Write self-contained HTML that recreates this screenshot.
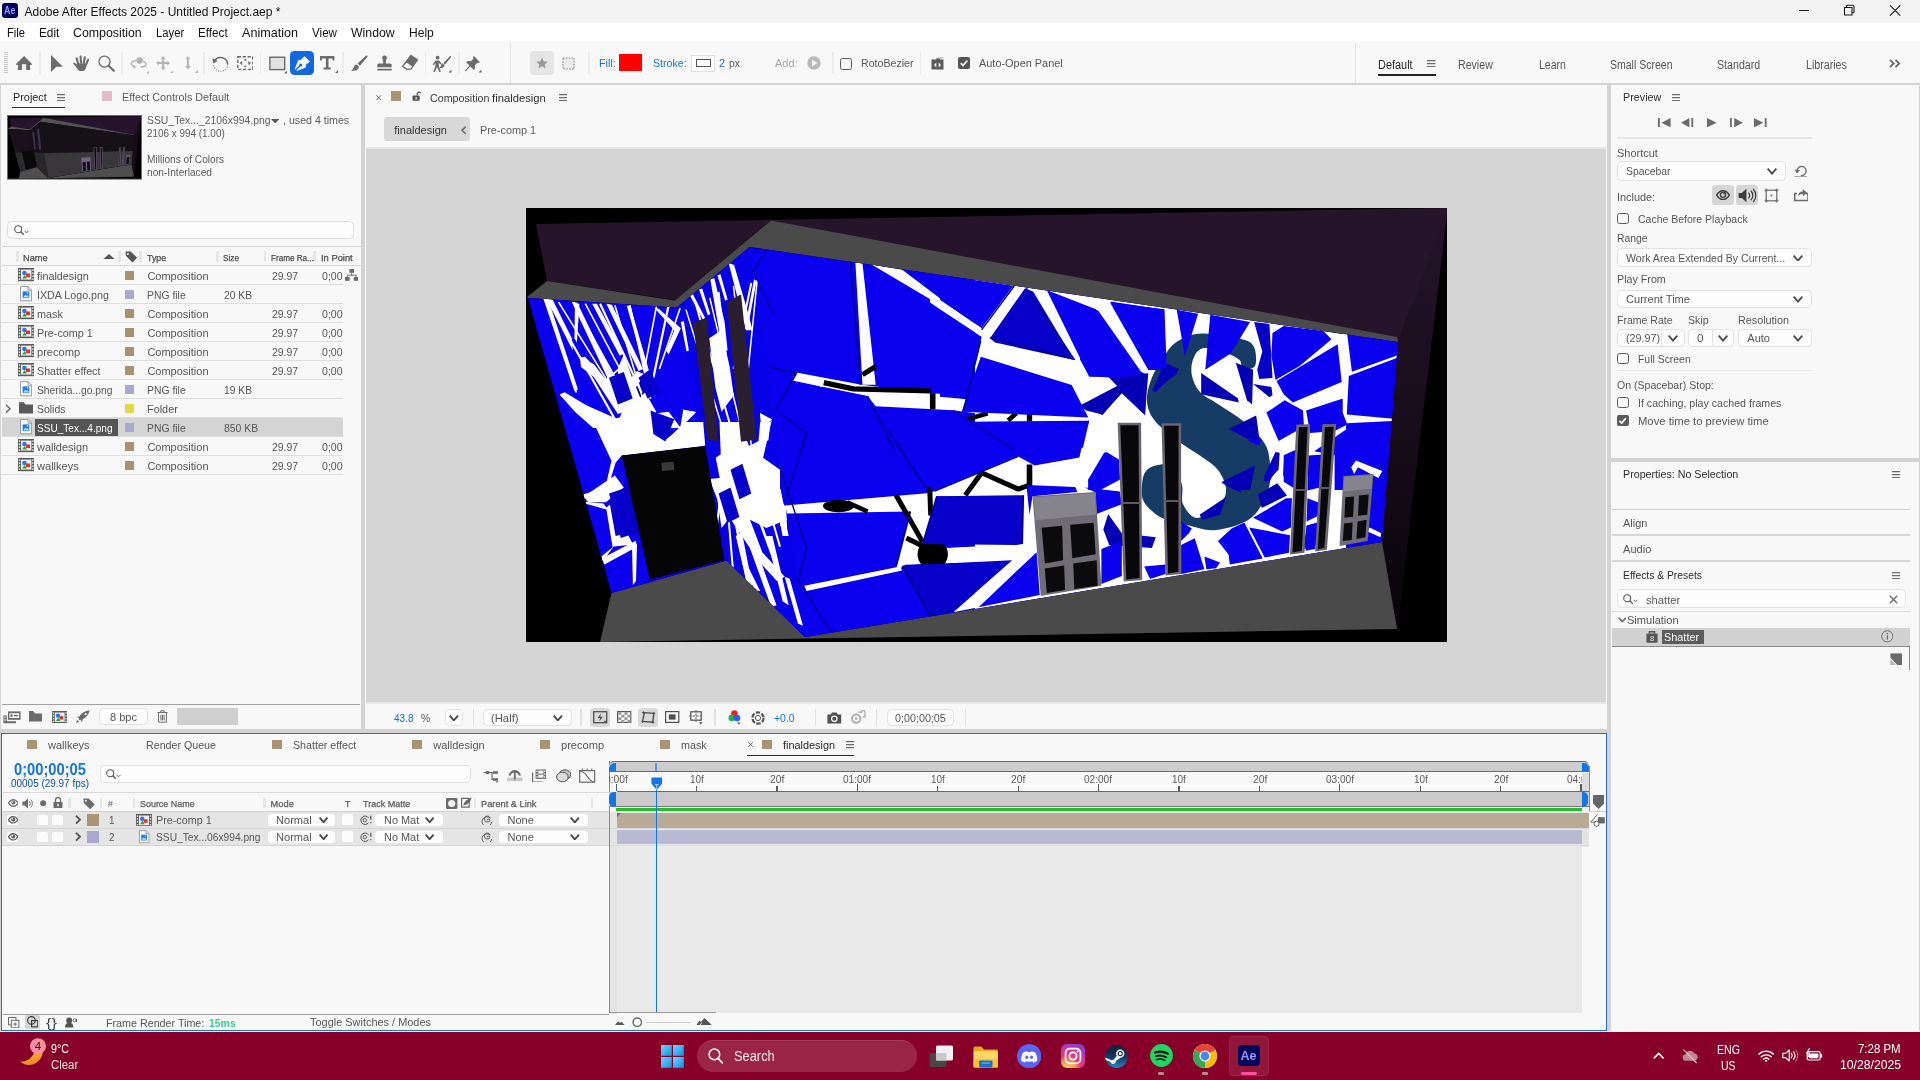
<!DOCTYPE html>
<html lang="en"><head><meta charset="utf-8"><title>Adobe After Effects 2025 - Untitled Project.aep *</title>
<style>
html,body{margin:0;padding:0;width:1920px;height:1080px;overflow:hidden;background:#d3d3d3;font-family:"Liberation Sans", sans-serif;}
#root{position:relative;width:1920px;height:1080px;overflow:hidden;will-change:transform;}
#root div,#root svg,#root span{position:absolute;display:block;box-sizing:border-box;}
.t{white-space:pre;line-height:1;transform-origin:0 50%;font-kerning:normal;}
</style></head><body><div id="root">
<div style="left:0px;top:0px;width:1920px;height:23px;background:#f3f3f3;"></div>
<div style="left:2px;top:3.1px;width:16px;height:14.9px;background:#00005b;border-radius:3px;"></div>
<span class="t" id="t0" style="left:4.2px;top:5px;font-size:10.5px;color:#9999ff;font-weight:700;transform:scaleX(0.8409);">Ae</span>
<span class="t" id="t1" style="left:24.5px;top:6px;font-size:12px;color:#111;">Adobe After Effects 2025 - Untitled Project.aep *</span>
<svg style="left:1790px;top:0px;" width="120" height="23" viewBox="0 0 120 23"><path d="M9 10.5h10M54.5 7.5h7.5v7.5h-7.5zM56.5 7.5v-1.2a1 1 0 0 1 1-1h5.3a1.2 1.2 0 0 1 1.2 1.2v5.3a1 1 0 0 1-1 1H62M100 5.3l10.3 10.3M110.3 5.3L100 15.6" fill="none" stroke="#1a1a1a" stroke-width="1.1"/></svg>
<div style="left:0px;top:23px;width:1920px;height:18px;background:#ffffff;"></div>
<span class="t" id="t2" style="left:7px;top:27px;font-size:12px;color:#111;transform:scaleX(0.9305);">File</span>
<span class="t" id="t3" style="left:39px;top:27px;font-size:12px;color:#111;transform:scaleX(0.9813);">Edit</span>
<span class="t" id="t4" style="left:73.3px;top:27px;font-size:12px;color:#111;transform:scaleX(1.0299);">Composition</span>
<span class="t" id="t5" style="left:156.3px;top:27px;font-size:12px;color:#111;transform:scaleX(0.9390);">Layer</span>
<span class="t" id="t6" style="left:198.3px;top:27px;font-size:12px;color:#111;transform:scaleX(0.9748);">Effect</span>
<span class="t" id="t7" style="left:242px;top:27px;font-size:12px;color:#111;transform:scaleX(1.0492);">Animation</span>
<span class="t" id="t8" style="left:312px;top:27px;font-size:12px;color:#111;transform:scaleX(0.9691);">View</span>
<span class="t" id="t9" style="left:351.3px;top:27px;font-size:12px;color:#111;transform:scaleX(1.0237);">Window</span>
<span class="t" id="t10" style="left:409px;top:27px;font-size:12px;color:#111;transform:scaleX(1.0046);">Help</span>
<div style="left:0px;top:41px;width:1920px;height:42px;background:#f8f8f8;"></div>
<div style="left:0px;top:82.9px;width:1920px;height:2.2px;background:#d3d3d3;"></div>
<svg style="left:4px;top:52px;" width="5" height="22" viewBox="0 0 5 22"><rect x="0.5" y="0" width="1" height="1" fill="#9a9a9a"/><rect x="2.5" y="0" width="1" height="1" fill="#9a9a9a"/><rect x="0.5" y="2" width="1" height="1" fill="#9a9a9a"/><rect x="2.5" y="2" width="1" height="1" fill="#9a9a9a"/><rect x="0.5" y="4" width="1" height="1" fill="#9a9a9a"/><rect x="2.5" y="4" width="1" height="1" fill="#9a9a9a"/><rect x="0.5" y="6" width="1" height="1" fill="#9a9a9a"/><rect x="2.5" y="6" width="1" height="1" fill="#9a9a9a"/><rect x="0.5" y="8" width="1" height="1" fill="#9a9a9a"/><rect x="2.5" y="8" width="1" height="1" fill="#9a9a9a"/><rect x="0.5" y="10" width="1" height="1" fill="#9a9a9a"/><rect x="2.5" y="10" width="1" height="1" fill="#9a9a9a"/><rect x="0.5" y="12" width="1" height="1" fill="#9a9a9a"/><rect x="2.5" y="12" width="1" height="1" fill="#9a9a9a"/><rect x="0.5" y="14" width="1" height="1" fill="#9a9a9a"/><rect x="2.5" y="14" width="1" height="1" fill="#9a9a9a"/><rect x="0.5" y="16" width="1" height="1" fill="#9a9a9a"/><rect x="2.5" y="16" width="1" height="1" fill="#9a9a9a"/><rect x="0.5" y="18" width="1" height="1" fill="#9a9a9a"/><rect x="2.5" y="18" width="1" height="1" fill="#9a9a9a"/><rect x="0.5" y="20" width="1" height="1" fill="#9a9a9a"/><rect x="2.5" y="20" width="1" height="1" fill="#9a9a9a"/></svg>
<div style="left:38.8px;top:52px;width:1.8px;height:22px;background:#ececec;"></div>
<div style="left:121.1px;top:52px;width:1.8px;height:22px;background:#ececec;"></div>
<div style="left:202.8px;top:52px;width:1.8px;height:22px;background:#ececec;"></div>
<div style="left:259.6px;top:52px;width:1.8px;height:22px;background:#ececec;"></div>
<div style="left:342.4px;top:52px;width:1.8px;height:22px;background:#ececec;"></div>
<div style="left:424.5px;top:52px;width:1.8px;height:22px;background:#ececec;"></div>
<div style="left:458.1px;top:52px;width:1.8px;height:22px;background:#ececec;"></div>
<div style="left:509.5px;top:43px;width:1.5px;height:39.9px;background:#e4e4e4;"></div>
<svg style="left:15.9px;top:55.8px;" width="16.2" height="14.2" viewBox="0 0 16.2 14.2"><path d="M8.100 0L0 8.100l0.600 0.900h1.500v5.200h3.800V8.200h4.300v6h3.800V9h1.500l0.600-0.900z" fill="#6b6b6b"/></svg>
<svg style="left:50.9px;top:55px;" width="12.2" height="17.2" viewBox="0 0 12.2 17.2"><path d="M0 0l11.900 11.700H5.300L0 17z" fill="#6b6b6b"/></svg>
<svg style="left:72.8px;top:54.8px;" width="16.4" height="16.6" viewBox="0 0 16.4 16.6"><g fill="none" stroke="#6b6b6b" stroke-width="2.100" stroke-linecap="round"><path d="M5.200 8.600L3.600 3.400M8 7.600L7.600 1.600M10.800 8L11.800 2.200M13.200 9.400L15 4.800M4.600 12L1.400 8.600"/></g><path d="M3.800 8.200l9.800 0.400c0.200 4.200-1.400 7.800-5 7.800-2.600 0-4.200-1.600-5.600-4.800z" fill="#6b6b6b"/></svg>
<svg style="left:97.5px;top:55px;" width="17" height="17" viewBox="0 0 17 17"><circle cx="6.500" cy="6.600" r="5.500" fill="none" stroke="#6b6b6b" stroke-width="1.300"/><path d="M10.600 10.800l5.200 5" stroke="#6b6b6b" stroke-width="2.100" stroke-linecap="round"/></svg>
<svg style="left:129.5px;top:55.5px;" width="19" height="18" viewBox="0 0 19 18"><circle cx="9.600" cy="4.600" r="3.300" fill="#b4b4b4"/><path d="M6 4.400C2.600 5 0.800 6.400 1.400 8.200c0.400 1.200 1.800 2 3.600 2.400" fill="none" stroke="#b4b4b4" stroke-width="1.500"/><path d="M2.800 9.200l4 1.800-3.400 1.600z" fill="#b4b4b4"/><path d="M13.200 5.400c2.600 1 3.400 2.600 2.400 4-0.800 1.200-2.600 1.800-5 1.800" fill="none" stroke="#b4b4b4" stroke-width="1.500"/><path d="M19 14.7v2.8h-2.8z" fill="#b4b4b4"/></svg>
<svg style="left:155.9px;top:55.8px;" width="17.2" height="17.4" viewBox="0 0 17.2 17.4"><path d="M7.100 0l2.400 3H8.100v3.100h3.100V4.700l3 2.400-3 2.400V8.100H8.100v3.100h1.400l-2.400 3-2.400-3h1.400V8.100H3v1.400L0 7.100l3-2.400v1.400h3.100V3H4.700z" fill="#b4b4b4"/><path d="M16.8 14.4v3h-3z" fill="#b4b4b4"/></svg>
<svg style="left:183px;top:56.2px;" width="15.2" height="17" viewBox="0 0 15.2 17"><path d="M4.900 0l2.400 3.200H5.800v6.600h2.200L4.900 13.600 1.800 9.800h2.200V3.200H2.500z" fill="#b4b4b4"/><path d="M15 14v3h-3z" fill="#b4b4b4"/></svg>
<svg style="left:211.5px;top:54.5px;" width="17.5" height="17.5" viewBox="0 0 17.5 17.5"><path d="M2.400 6.400A7 7 0 0 1 15.600 9.600" fill="none" stroke="#6b6b6b" stroke-width="1.500"/><path d="M0.400 3.200l0.800 5.400 4.600-2.600z" fill="#6b6b6b"/><path d="M15.600 9.600A7 7 0 0 1 1.700 10.400" fill="none" stroke="#6b6b6b" stroke-width="1.100" stroke-dasharray="0.900 1.500"/></svg>
<svg style="left:236.8px;top:55.9px;" width="16.6" height="14.2" viewBox="0 0 16.6 14.2"><rect x="0.800" y="0.800" width="15" height="12.600" fill="none" stroke="#6b6b6b" stroke-width="1.400" stroke-dasharray="3.200 1.700"/><path d="M8.300 2.600l1.700 1.800H6.600zM8.300 11.600l1.700-1.800H6.600zM2.600 7.100l2.200-1.900v3.800zM14 7.100l-2.200-1.900v3.800z" fill="#6b6b6b"/><path d="M4.800 5.400v3.400M11.800 5.400v3.400" stroke="#6b6b6b" stroke-width="0.800"/></svg>
<svg style="left:269px;top:55.6px;" width="18.4" height="18" viewBox="0 0 18.4 18"><rect x="0.900" y="1.200" width="14.800" height="12.400" fill="#e2e2e2" stroke="#6b6b6b" stroke-width="1.400"/><path d="M18 14.600v3h-3z" fill="#6b6b6b"/></svg>
<div style="left:290.4px;top:51px;width:23.6px;height:24.2px;background:#1068e2;border-radius:4.500px;"></div>
<svg style="left:293.5px;top:54.5px;" width="18" height="18" viewBox="0 0 18 18"><path d="M10.6 1.2l5.2 5.2-2.3 2.3-0.9-0.4-1 4.3-8.8 3.4-0.5-0.5 4-4a1.5 1.5 0 1 0-1-1l-4 4-0.5-0.5 3.4-8.8 4.3-1-0.4-0.9z" fill="#fff"/><path d="M17.6 14v2.6h-2.6z" fill="#0d4fa0"/></svg>
<svg style="left:320px;top:56.2px;" width="18.4" height="17.4" viewBox="0 0 18.4 17.4"><path d="M0 0h14.400v4.600h-1.900V2.500H8.500v9.100h2.300v1.900H3.600v-1.900h2.300V2.500H1.900v2.100H0z" fill="#6b6b6b"/><path d="M18 14v3h-3z" fill="#6b6b6b"/></svg>
<svg style="left:351px;top:54.5px;" width="17" height="17" viewBox="0 0 17 17"><path d="M16.2 0.6c.5.4.4 1-.1 1.6L8.9 10.8 6.6 8.6 14.6.9c.6-.5 1.1-.7 1.6-.3zM5.7 9.5l2.2 2.2c-.2 2.3-1.600 3.500-3.700 3.900-1.500.3-3 .1-4-.4 1.700-.6 2.100-1.600 2.500-3 .4-1.500 1.400-2.500 3-2.700z" fill="#6b6b6b"/></svg>
<svg style="left:376px;top:54.5px;" width="17" height="17" viewBox="0 0 17 17"><path d="M6.200 2.800a2.300 2.300 0 1 1 4.600 0c0 1.500-1 2.400-1 4v1.700h4.400a1.500 1.500 0 0 1 1.500 1.500v2.200H1.300V10a1.500 1.500 0 0 1 1.500-1.500h4.400V6.800c0-1.600-1-2.500-1-4zM1.300 13.800h14.400v1.700H1.300z" fill="#6b6b6b"/></svg>
<svg style="left:400.6px;top:54.4px;" width="18" height="16.6" viewBox="0 0 18 16.6"><path d="M9.800 0.400l7.600 5.400-7.200 10H5.400L0.600 12.400z" fill="#6b6b6b"/><path d="M2.400 12l3.500 2.600h3.600l1.600-2.200-5.400-3.900z" fill="#f8f8f8"/></svg>
<svg style="left:432px;top:54.5px;" width="20" height="18" viewBox="0 0 20 18"><circle cx="5.600" cy="2.600" r="1.900" fill="#6b6b6b"/><path d="M3.400 5.400h3.800l2.400 3.200-1 .9-1.800-1.800v3.400l2 5.300-1.500.6-2.300-5-2.200 5.100-1.500-.6 2.100-5.500V8l-1.600 2.200-1.100-.8z" fill="#6b6b6b"/><path d="M18.800 1.200c.4.300.3.800 0 1.200l-5.700 7-1.700-1.500 6.200-6.500c.4-.4.800-.5 1.200-.2zM10.800 8.600l1.700 1.500c-.1 1.800-1.100 2.700-2.700 3-1 .2-1.800 0-2.400-.3 1-.4 1.400-1.200 1.600-2.200.3-1.100.8-1.800 1.800-2z" fill="#6b6b6b"/><path d="M19.5 14.5v3h-3z" fill="#6b6b6b"/></svg>
<svg style="left:463.5px;top:54.5px;" width="18" height="18" viewBox="0 0 18 18"><path d="M9.600 0.800l6.200 6.200-1.100 1.100-1.300-.4-2.700 2.700c.6 1.700.3 3.400-.8 4.600L6.400 11.500 1.700 16.200l-.900.100.1-.9 4.700-4.700L2.100 7.200c1.200-1.100 2.900-1.400 4.600-.8l2.700-2.700-.4-1.300z" fill="#6b6b6b"/><path d="M17.5 14.5v3h-3z" fill="#6b6b6b"/></svg>
<div style="left:530px;top:51px;width:24px;height:23.5px;background:#e5e5e5;border-radius:4px;"></div>
<svg style="left:536px;top:56.5px;" width="12" height="12" viewBox="0 0 12 12"><path d="M6 0.600l1.700 3.700 4 .4-3 2.700.9 4L6 9.300 2.400 11.400l.9-4-3-2.700 4-.4z" fill="#9a9a9a"/></svg>
<svg style="left:562px;top:57px;" width="13" height="13" viewBox="0 0 13 13"><rect x="1" y="1" width="11" height="11" fill="#ececec" stroke="#aaa" stroke-width="1.6" stroke-dasharray="1.600 1.200"/></svg>
<div style="left:588.2px;top:52px;width:1.8px;height:22px;background:#ececec;"></div>
<span class="t" id="t11" style="left:598.5px;top:58px;font-size:11px;color:#1473e6;transform:scaleX(0.9819);">Fill:</span>
<div style="left:619.4px;top:54.4px;width:23.1px;height:17px;background:#ff0000;"></div>
<span class="t" id="t12" style="left:653px;top:58px;font-size:11px;color:#1473e6;transform:scaleX(0.9639);">Stroke:</span>
<div style="left:691px;top:54.5px;width:23.5px;height:17px;background:#ffffff;border:1px solid #e0e0e0;"></div>
<div style="left:695.6px;top:58.6px;width:15px;height:8.4px;background:#fdfdfd;border:1.400px solid #555;"></div>
<span class="t" id="t13" style="left:719.3px;top:58px;font-size:11px;color:#1473e6;transform:scaleX(0.9796);">2</span>
<span class="t" id="t14" style="left:729px;top:58px;font-size:11px;color:#565656;transform:scaleX(0.9462);">px</span>
<span class="t" id="t15" style="left:775px;top:58px;font-size:11px;color:#a6a6a6;">Add:</span>
<svg style="left:807px;top:56px;" width="14" height="14" viewBox="0 0 14 14"><circle cx="7" cy="7" r="6.700" fill="#b9b9b9"/><path d="M5.200 3.500v7l5.200-3.500z" fill="#f8f8f8"/></svg>
<div style="left:832.2px;top:52px;width:1.8px;height:22px;background:#ececec;"></div>
<div style="left:840px;top:57.5px;width:12px;height:12px;background:#fdfdfd;border:1.900px solid #5a5a5a;border-radius:2.600px;"></div>
<span class="t" id="t16" style="left:861.3px;top:58px;font-size:11px;color:#565656;transform:scaleX(0.9647);">RotoBezier</span>
<div style="left:919.7px;top:52px;width:1.8px;height:22px;background:#ececec;"></div>
<svg style="left:930.5px;top:57px;" width="13" height="13" viewBox="0 0 13 13"><path d="M0.500 2.500h4.500l1 -1.500h3v1.500h3.500v10h-12z" fill="#5a5a5a"/><path d="M5.300 5.600L3 8l2.300 2.400zM7.700 5.600L10 8l-2.300 2.400z" fill="#f8f8f8"/><rect x="6.500" y="0.300" width="6" height="1.400" fill="#bdbdbd"/></svg>
<div style="left:958px;top:57px;width:12px;height:12px;background:#555;border-radius:2px;"></div>
<svg style="left:958px;top:57px;" width="12" height="12" viewBox="0 0 12 12"><path d="M2.800 6.200l2.300 2.300 4.200-5" fill="none" stroke="#fff" stroke-width="1.700"/></svg>
<span class="t" id="t17" style="left:979.3px;top:58px;font-size:11px;color:#565656;transform:scaleX(0.9918);">Auto-Open Panel</span>
<div style="left:1354.5px;top:43px;width:1.5px;height:39.9px;background:#e4e4e4;"></div>
<span class="t" id="t18" style="left:1378.4px;top:59px;font-size:12px;color:#2a2a2a;transform:scaleX(0.9098);">Default</span>
<svg style="left:1427px;top:60.3px;" width="8.5" height="7.2" viewBox="0 0 8.5 7.2"><path d="M0 .6h8.5 M0 3.6h8.5 M0 6.6h8.5" stroke="#6b6b6b" stroke-width="1.100"/></svg>
<div style="left:1377.5px;top:73.6px;width:58px;height:2px;background:#222;"></div>
<span class="t" id="t19" style="left:1458.4px;top:59px;font-size:12px;color:#565656;transform:scaleX(0.8842);">Review</span>
<span class="t" id="t20" style="left:1538.5px;top:59px;font-size:12px;color:#565656;transform:scaleX(0.8761);">Learn</span>
<span class="t" id="t21" style="left:1609.8px;top:59px;font-size:12px;color:#565656;transform:scaleX(0.8757);">Small Screen</span>
<span class="t" id="t22" style="left:1717px;top:59px;font-size:12px;color:#565656;transform:scaleX(0.8870);">Standard</span>
<span class="t" id="t23" style="left:1805.5px;top:59px;font-size:12px;color:#565656;transform:scaleX(0.8864);">Libraries</span>
<svg style="left:1888.5px;top:59px;" width="12" height="9" viewBox="0 0 12 9"><path d="M1 .800l3.700 3.700L1 8.200M6.500 .800l3.700 3.700-3.700 3.700" fill="none" stroke="#6b6b6b" stroke-width="1.900"/></svg>
<div style="left:0px;top:85px;width:366px;height:648.5px;background:#d3d3d3;"></div>
<div style="left:1px;top:85.1px;width:360.1px;height:643.9px;background:#f8f8f8;"></div>
<span class="t" id="t24" style="left:13px;top:92px;font-size:11px;color:#2a2a2a;transform:scaleX(0.9869);">Project</span>
<svg style="left:57px;top:93.6px;" width="8" height="7.2" viewBox="0 0 8 7.2"><path d="M0 .6h8 M0 3.6h8 M0 6.6h8" stroke="#6b6b6b" stroke-width="1.100"/></svg>
<div style="left:12px;top:106.8px;width:53px;height:1.3px;background:#333;"></div>
<div style="left:101.7px;top:91px;width:10.3px;height:10px;background:#e6b9c9;"></div>
<span class="t" id="t25" style="left:122px;top:92px;font-size:11px;color:#5c5c5c;transform:scaleX(0.9767);">Effect Controls Default</span>
<svg style="left:7px;top:115px" width="135" height="64.7" viewBox="0 0 135 64.7"><rect width="135" height="64.7" fill="#6a6a6a"/><rect x="1" y="1" width="133" height="62.7" fill="#020202"/><g transform="translate(1,1) scale(0.14441,0.14447)"><polygon fill="#26142c" points="10.0,16.0 921.0,0.0 871.0,421.0 856.0,334.0 872.0,134.0 244.0,13.0 150.0,92.0 21.0,73.0"/><polygon fill="#170d1a" points="872.0,134.0 921.0,0.0 921.0,7.0 871.0,421.0 856.0,334.0"/><polygon fill="#545454" points="1.0,89.0 21.0,73.0 149.0,92.5 245.0,12.5 871.0,129.0 872.0,134.0 223.5,39.0 151.0,99.5 2.0,90.0"/><polygon fill="#4e4e4e" points="85.5,385.0 200.6,352.5 279.0,429.0 856.0,334.0 871.0,421.0 74.0,434.0"/><polygon fill="#151116" points="2.0,90.0 151.0,99.5 223.5,39.0 872.0,134.0 856.0,334.0 279.0,429.0 200.6,352.5 85.5,385.0"/><polygon fill="#1a1119" points="2.0,90.0 151.0,99.5 174.0,247.0 49.0,252.0"/><polygon fill="#39373a" points="247.0,258.0 864.0,243.0 856.0,334.0 279.0,429.0"/><polygon fill="#2c2a2d" points="49.0,252.0 174.0,247.0 200.6,352.5 85.5,385.0"/><polygon fill="#28262a" points="174.0,247.0 247.0,258.0 279.0,429.0 200.6,352.5"/><polygon fill="#0a090b" points="95.7,247.6 179.2,238.0 198.6,352.0 123.8,371.8"/><polygon fill="#43304e" points="167.0,114.0 181.0,110.0 192.0,233.5 181.5,231.5"/><polygon fill="#43304e" points="200.6,93.7 215.0,86.6 230.7,231.6 215.0,233.7"/><polygon fill="#57495f" points="591.7,214.7 615.1,214.7 616.2,372.0 597.7,373.5"/><polygon fill="#0c0a0e" points="597.7,218.7 609.1,218.7 610.2,369.0 603.7,370.5"/><polygon fill="#57495f" points="635.5,215.2 655.2,215.2 655.0,366.0 639.5,367.5"/><polygon fill="#0c0a0e" points="641.5,219.2 649.2,219.2 649.0,363.0 645.5,364.5"/><polygon fill="#57495f" points="770.3,216.6 784.1,216.3 778.5,344.8 764.0,346.5"/><polygon fill="#0c0a0e" points="776.3,220.6 778.1,220.3 772.5,341.8 770.0,343.5"/><polygon fill="#57495f" points="796.4,216.3 810.2,216.1 800.9,341.8 789.2,343.5"/><polygon fill="#0c0a0e" points="802.4,220.3 804.2,220.1 794.9,338.8 795.2,340.5"/><polygon fill="#6d6482" points="506.5,288.2 569.7,284.0 575.4,377.8 514.7,388.0"/><polygon fill="#120f16" points="516.0,320.0 538.0,318.0 540.0,380.0 520.0,384.0"/><polygon fill="#120f16" points="546.0,317.0 566.0,315.0 570.0,375.0 549.0,379.0"/><polygon fill="#5a516c" points="817.4,268.0 847.5,266.0 841.7,333.0 813.5,338.0"/><polygon fill="#120f16" points="822.0,286.0 841.0,284.0 837.0,330.0 818.0,334.0"/></g></svg>
<span class="t" id="t26" style="left:146.8px;top:115px;font-size:11px;color:#5c5c5c;transform:scaleX(0.9444);">SSU_Tex..._2106x994.png</span>
<svg style="left:271.3px;top:118.8px;" width="8.2" height="4.6" viewBox="0 0 8.2 4.6"><path d="M0 0h8.200L4.100 4.600z" fill="#555"/></svg>
<span class="t" id="t27" style="left:283px;top:115px;font-size:11px;color:#5c5c5c;transform:scaleX(0.9666);">, used 4 times</span>
<span class="t" id="t28" style="left:146.8px;top:128px;font-size:11px;color:#5c5c5c;transform:scaleX(0.9010);">2106 x 994 (1.00)</span>
<span class="t" id="t29" style="left:147px;top:154px;font-size:11px;color:#5c5c5c;transform:scaleX(0.9206);">Millions of Colors</span>
<span class="t" id="t30" style="left:147px;top:167px;font-size:11px;color:#5c5c5c;transform:scaleX(0.9242);">non-Interlaced</span>
<div style="left:7.3px;top:220.5px;width:347.2px;height:18.6px;background:#fdfdfd;border:1px solid #dddddd;border-radius:4.500px;"></div>
<svg style="left:14.3px;top:224.6px;" width="17" height="11" viewBox="0 0 17 11"><circle cx="4.200" cy="4.200" r="3.500" fill="none" stroke="#5c5c5c" stroke-width="1.100"/><path d="M6.800 6.800l3 3" stroke="#5c5c5c" stroke-width="1.300"/><path d="M10.600 5.800l2 2 2-2" fill="none" stroke="#5c5c5c" stroke-width="1"/></svg>
<div style="left:2px;top:246.2px;width:358.5px;height:1px;background:#d4d4d4;"></div>
<div style="left:16.1px;top:251.3px;width:2.6px;height:10.3px;background:#e6e6e6;"></div>
<div style="left:118.1px;top:251.3px;width:2.6px;height:10.3px;background:#e6e6e6;"></div>
<div style="left:139.2px;top:251.3px;width:2.6px;height:10.3px;background:#e6e6e6;"></div>
<div style="left:216px;top:251.3px;width:2.6px;height:10.3px;background:#e6e6e6;"></div>
<div style="left:263.7px;top:251.3px;width:2.6px;height:10.3px;background:#e6e6e6;"></div>
<div style="left:313.2px;top:251.3px;width:2.6px;height:10.3px;background:#e6e6e6;"></div>
<span class="t" id="t31" style="left:23.2px;top:254px;font-size:9.3px;color:#4c4c4c;transform:scaleX(0.9955);-webkit-text-stroke:0.250px currentColor;">Name</span>
<svg style="left:103px;top:254.2px;" width="12" height="5.3" viewBox="0 0 12 5.3"><path d="M0 5.300L6 0l6 5.300z" fill="#555"/></svg>
<svg style="left:125px;top:251.4px;" width="12.5" height="11.5" viewBox="0 0 12.5 11.5"><path d="M0.400 0.400h5.300l6.400 6.400-4.600 4.600L1.100 5z" fill="#555"/><circle cx="2.900" cy="2.900" r="1" fill="#f8f8f8"/></svg>
<span class="t" id="t32" style="left:146.5px;top:254px;font-size:9.3px;color:#4c4c4c;transform:scaleX(0.9526);-webkit-text-stroke:0.250px currentColor;">Type</span>
<span class="t" id="t33" style="left:223px;top:254px;font-size:9.3px;color:#4c4c4c;transform:scaleX(0.8843);-webkit-text-stroke:0.250px currentColor;">Size</span>
<span class="t" id="t34" style="left:270.8px;top:254px;font-size:9.3px;color:#4c4c4c;transform:scaleX(0.8741);-webkit-text-stroke:0.250px currentColor;">Frame Ra...</span>
<span class="t" id="t35" style="left:320.9px;top:254px;font-size:9.3px;color:#4c4c4c;transform:scaleX(1.0054);-webkit-text-stroke:0.250px currentColor;">In Point</span>
<div style="left:2px;top:265px;width:358.5px;height:1px;background:#d8d8d8;"></div>
<svg style="left:17.8px;top:268.4px;" width="16.4" height="13.2" viewBox="0 0 16.400 13.200"><rect width="16.400" height="13.200" fill="#5b5b5b"/><rect x="3" y="1.600" width="10.400" height="10" fill="#f0f0f0"/><rect x="0.8" y="1.4" width="1.400" height="1.500" fill="#f0f0f0"/><rect x="0.8" y="4.4" width="1.400" height="1.500" fill="#f0f0f0"/><rect x="0.8" y="7.4" width="1.400" height="1.500" fill="#f0f0f0"/><rect x="0.8" y="10.4" width="1.400" height="1.500" fill="#f0f0f0"/><rect x="14.2" y="1.4" width="1.400" height="1.500" fill="#f0f0f0"/><rect x="14.2" y="4.4" width="1.400" height="1.500" fill="#f0f0f0"/><rect x="14.2" y="7.4" width="1.400" height="1.500" fill="#f0f0f0"/><rect x="14.2" y="10.4" width="1.400" height="1.500" fill="#f0f0f0"/><circle cx="6.400" cy="5" r="2.300" fill="#2a78e4"/><rect x="8" y="5.500" width="4" height="3.600" fill="#e0322c"/><path d="M4.200 10.600l2.400-3.600 2.400 3.600z" fill="#2f9e44"/></svg>
<span class="t" id="t36" style="left:37.1px;top:271px;font-size:11px;color:#565656;transform:scaleX(0.9830);">finaldesign</span>
<div style="left:125px;top:271.2px;width:9px;height:8.8px;background:#a9916f;"></div>
<span class="t" id="t37" style="left:147.4px;top:271px;font-size:11px;color:#565656;">Composition</span>
<span class="t" id="t38" style="left:271.9px;top:271px;font-size:11px;color:#565656;transform:scaleX(0.9480);">29.97</span>
<span class="t" id="t39" style="left:322.4px;top:271px;font-size:11px;color:#565656;transform:scaleX(0.9616);">0;00</span>
<div style="left:2px;top:284.2px;width:341px;height:1px;background:#dedede;"></div>
<svg style="left:20.2px;top:286.4px;" width="12.2" height="15.4" viewBox="0 0 12.200 15.400"><path d="M0.600 0.600h7.400l3.600 3.600v10.600h-11z" fill="#fff" stroke="#8c8c8c" stroke-width="0.900"/><path d="M8 0.600v3.600h3.600" fill="none" stroke="#8c8c8c" stroke-width="0.900"/><rect x="2.600" y="5.400" width="6.800" height="6.800" fill="#1f7de0"/><path d="M3.200 11.400l2.200-3 1.400 1.600 1-1 1.200 2.400z" fill="#bfe0ff"/><circle cx="7.600" cy="6.900" r="0.800" fill="#bfe0ff"/></svg>
<span class="t" id="t40" style="left:37.1px;top:290px;font-size:11px;color:#565656;transform:scaleX(0.9714);">IXDA Logo.png</span>
<div style="left:125px;top:290.2px;width:9px;height:8.8px;background:#a9a8cf;"></div>
<span class="t" id="t41" style="left:147.4px;top:290px;font-size:11px;color:#565656;transform:scaleX(0.9446);">PNG file</span>
<span class="t" id="t42" style="left:224.2px;top:290px;font-size:11px;color:#565656;transform:scaleX(0.9376);">20 KB</span>
<div style="left:2px;top:303.2px;width:341px;height:1px;background:#dedede;"></div>
<svg style="left:17.8px;top:306.4px;" width="16.4" height="13.2" viewBox="0 0 16.400 13.200"><rect width="16.400" height="13.200" fill="#5b5b5b"/><rect x="3" y="1.600" width="10.400" height="10" fill="#f0f0f0"/><rect x="0.8" y="1.4" width="1.400" height="1.500" fill="#f0f0f0"/><rect x="0.8" y="4.4" width="1.400" height="1.500" fill="#f0f0f0"/><rect x="0.8" y="7.4" width="1.400" height="1.500" fill="#f0f0f0"/><rect x="0.8" y="10.4" width="1.400" height="1.500" fill="#f0f0f0"/><rect x="14.2" y="1.4" width="1.400" height="1.500" fill="#f0f0f0"/><rect x="14.2" y="4.4" width="1.400" height="1.500" fill="#f0f0f0"/><rect x="14.2" y="7.4" width="1.400" height="1.500" fill="#f0f0f0"/><rect x="14.2" y="10.4" width="1.400" height="1.500" fill="#f0f0f0"/><circle cx="6.400" cy="5" r="2.300" fill="#2a78e4"/><rect x="8" y="5.500" width="4" height="3.600" fill="#e0322c"/><path d="M4.200 10.600l2.400-3.600 2.400 3.600z" fill="#2f9e44"/></svg>
<span class="t" id="t43" style="left:37.1px;top:309px;font-size:11px;color:#565656;transform:scaleX(0.9855);">mask</span>
<div style="left:125px;top:309.2px;width:9px;height:8.8px;background:#a9916f;"></div>
<span class="t" id="t44" style="left:147.4px;top:309px;font-size:11px;color:#565656;">Composition</span>
<span class="t" id="t45" style="left:271.9px;top:309px;font-size:11px;color:#565656;transform:scaleX(0.9480);">29.97</span>
<span class="t" id="t46" style="left:322.4px;top:309px;font-size:11px;color:#565656;transform:scaleX(0.9616);">0;00</span>
<div style="left:2px;top:322.2px;width:341px;height:1px;background:#dedede;"></div>
<svg style="left:17.8px;top:325.4px;" width="16.4" height="13.2" viewBox="0 0 16.400 13.200"><rect width="16.400" height="13.200" fill="#5b5b5b"/><rect x="3" y="1.600" width="10.400" height="10" fill="#f0f0f0"/><rect x="0.8" y="1.4" width="1.400" height="1.500" fill="#f0f0f0"/><rect x="0.8" y="4.4" width="1.400" height="1.500" fill="#f0f0f0"/><rect x="0.8" y="7.4" width="1.400" height="1.500" fill="#f0f0f0"/><rect x="0.8" y="10.4" width="1.400" height="1.500" fill="#f0f0f0"/><rect x="14.2" y="1.4" width="1.400" height="1.500" fill="#f0f0f0"/><rect x="14.2" y="4.4" width="1.400" height="1.500" fill="#f0f0f0"/><rect x="14.2" y="7.4" width="1.400" height="1.500" fill="#f0f0f0"/><rect x="14.2" y="10.4" width="1.400" height="1.500" fill="#f0f0f0"/><circle cx="6.400" cy="5" r="2.300" fill="#2a78e4"/><rect x="8" y="5.500" width="4" height="3.600" fill="#e0322c"/><path d="M4.200 10.600l2.400-3.600 2.400 3.600z" fill="#2f9e44"/></svg>
<span class="t" id="t47" style="left:37.1px;top:328px;font-size:11px;color:#565656;transform:scaleX(0.9814);">Pre-comp 1</span>
<div style="left:125px;top:328.2px;width:9px;height:8.8px;background:#a9916f;"></div>
<span class="t" id="t48" style="left:147.4px;top:328px;font-size:11px;color:#565656;">Composition</span>
<span class="t" id="t49" style="left:271.9px;top:328px;font-size:11px;color:#565656;transform:scaleX(0.9480);">29.97</span>
<span class="t" id="t50" style="left:322.4px;top:328px;font-size:11px;color:#565656;transform:scaleX(0.9616);">0;00</span>
<div style="left:2px;top:341.2px;width:341px;height:1px;background:#dedede;"></div>
<svg style="left:17.8px;top:344.4px;" width="16.4" height="13.2" viewBox="0 0 16.400 13.200"><rect width="16.400" height="13.200" fill="#5b5b5b"/><rect x="3" y="1.600" width="10.400" height="10" fill="#f0f0f0"/><rect x="0.8" y="1.4" width="1.400" height="1.500" fill="#f0f0f0"/><rect x="0.8" y="4.4" width="1.400" height="1.500" fill="#f0f0f0"/><rect x="0.8" y="7.4" width="1.400" height="1.500" fill="#f0f0f0"/><rect x="0.8" y="10.4" width="1.400" height="1.500" fill="#f0f0f0"/><rect x="14.2" y="1.4" width="1.400" height="1.500" fill="#f0f0f0"/><rect x="14.2" y="4.4" width="1.400" height="1.500" fill="#f0f0f0"/><rect x="14.2" y="7.4" width="1.400" height="1.500" fill="#f0f0f0"/><rect x="14.2" y="10.4" width="1.400" height="1.500" fill="#f0f0f0"/><circle cx="6.400" cy="5" r="2.300" fill="#2a78e4"/><rect x="8" y="5.500" width="4" height="3.600" fill="#e0322c"/><path d="M4.200 10.600l2.400-3.600 2.400 3.600z" fill="#2f9e44"/></svg>
<span class="t" id="t51" style="left:37.1px;top:347px;font-size:11px;color:#565656;transform:scaleX(1.0094);">precomp</span>
<div style="left:125px;top:347.2px;width:9px;height:8.8px;background:#a9916f;"></div>
<span class="t" id="t52" style="left:147.4px;top:347px;font-size:11px;color:#565656;">Composition</span>
<span class="t" id="t53" style="left:271.9px;top:347px;font-size:11px;color:#565656;transform:scaleX(0.9480);">29.97</span>
<span class="t" id="t54" style="left:322.4px;top:347px;font-size:11px;color:#565656;transform:scaleX(0.9616);">0;00</span>
<div style="left:2px;top:360.2px;width:341px;height:1px;background:#dedede;"></div>
<svg style="left:17.8px;top:363.4px;" width="16.4" height="13.2" viewBox="0 0 16.400 13.200"><rect width="16.400" height="13.200" fill="#5b5b5b"/><rect x="3" y="1.600" width="10.400" height="10" fill="#f0f0f0"/><rect x="0.8" y="1.4" width="1.400" height="1.500" fill="#f0f0f0"/><rect x="0.8" y="4.4" width="1.400" height="1.500" fill="#f0f0f0"/><rect x="0.8" y="7.4" width="1.400" height="1.500" fill="#f0f0f0"/><rect x="0.8" y="10.4" width="1.400" height="1.500" fill="#f0f0f0"/><rect x="14.2" y="1.4" width="1.400" height="1.500" fill="#f0f0f0"/><rect x="14.2" y="4.4" width="1.400" height="1.500" fill="#f0f0f0"/><rect x="14.2" y="7.4" width="1.400" height="1.500" fill="#f0f0f0"/><rect x="14.2" y="10.4" width="1.400" height="1.500" fill="#f0f0f0"/><circle cx="6.400" cy="5" r="2.300" fill="#2a78e4"/><rect x="8" y="5.500" width="4" height="3.600" fill="#e0322c"/><path d="M4.200 10.600l2.400-3.600 2.400 3.600z" fill="#2f9e44"/></svg>
<span class="t" id="t55" style="left:37.1px;top:366px;font-size:11px;color:#565656;transform:scaleX(0.9719);">Shatter effect</span>
<div style="left:125px;top:366.2px;width:9px;height:8.8px;background:#a9916f;"></div>
<span class="t" id="t56" style="left:147.4px;top:366px;font-size:11px;color:#565656;">Composition</span>
<span class="t" id="t57" style="left:271.9px;top:366px;font-size:11px;color:#565656;transform:scaleX(0.9480);">29.97</span>
<span class="t" id="t58" style="left:322.4px;top:366px;font-size:11px;color:#565656;transform:scaleX(0.9616);">0;00</span>
<div style="left:2px;top:379.2px;width:341px;height:1px;background:#dedede;"></div>
<svg style="left:20.2px;top:381.4px;" width="12.2" height="15.4" viewBox="0 0 12.200 15.400"><path d="M0.600 0.600h7.400l3.600 3.600v10.600h-11z" fill="#fff" stroke="#8c8c8c" stroke-width="0.900"/><path d="M8 0.600v3.600h3.600" fill="none" stroke="#8c8c8c" stroke-width="0.900"/><rect x="2.600" y="5.400" width="6.800" height="6.800" fill="#1f7de0"/><path d="M3.200 11.400l2.200-3 1.400 1.600 1-1 1.200 2.400z" fill="#bfe0ff"/><circle cx="7.600" cy="6.900" r="0.800" fill="#bfe0ff"/></svg>
<span class="t" id="t59" style="left:37.1px;top:385px;font-size:11px;color:#565656;transform:scaleX(0.9352);">Sherida...go.png</span>
<div style="left:125px;top:385.2px;width:9px;height:8.8px;background:#a9a8cf;"></div>
<span class="t" id="t60" style="left:147.4px;top:385px;font-size:11px;color:#565656;transform:scaleX(0.9446);">PNG file</span>
<span class="t" id="t61" style="left:224.2px;top:385px;font-size:11px;color:#565656;transform:scaleX(0.9376);">19 KB</span>
<div style="left:2px;top:398.2px;width:341px;height:1px;background:#dedede;"></div>
<svg style="left:18.8px;top:402px;" width="14.4" height="11.6" viewBox="0 0 14.4 11.6"><path d="M0 1h5.400l1 1.600h8v9H0z" fill="#5a5a5a"/><rect x="0" y="0" width="5" height="1.200" fill="#777"/></svg>
<svg style="left:4.6px;top:403.6px;" width="6" height="9.6" viewBox="0 0 6 9.6"><path d="M1 0.800l4 4-4 4" fill="none" stroke="#6b6b6b" stroke-width="1.500"/></svg>
<span class="t" id="t62" style="left:37.1px;top:404px;font-size:11px;color:#565656;transform:scaleX(0.9510);">Solids</span>
<div style="left:125px;top:404.2px;width:9px;height:8.8px;background:#e3d74c;"></div>
<span class="t" id="t63" style="left:147.4px;top:404px;font-size:11px;color:#565656;transform:scaleX(0.9876);">Folder</span>
<div style="left:2px;top:417.2px;width:341px;height:1px;background:#dedede;"></div>
<div style="left:2px;top:418.2px;width:341px;height:18.6px;background:#d4d4d4;"></div>
<div style="left:35px;top:419px;width:83.2px;height:17px;background:#555555;"></div>
<svg style="left:20.2px;top:419.4px;" width="12.2" height="15.4" viewBox="0 0 12.200 15.400"><path d="M0.600 0.600h7.400l3.600 3.600v10.600h-11z" fill="#fff" stroke="#8c8c8c" stroke-width="0.900"/><path d="M8 0.600v3.600h3.600" fill="none" stroke="#8c8c8c" stroke-width="0.900"/><rect x="2.600" y="5.400" width="6.800" height="6.800" fill="#1f7de0"/><path d="M3.200 11.400l2.200-3 1.400 1.600 1-1 1.200 2.400z" fill="#bfe0ff"/><circle cx="7.600" cy="6.900" r="0.800" fill="#bfe0ff"/></svg>
<span class="t" id="t64" style="left:37.1px;top:423px;font-size:11px;color:#fff;transform:scaleX(0.9145);">SSU_Tex...4.png</span>
<div style="left:125px;top:423.2px;width:9px;height:8.8px;background:#a9a8cf;"></div>
<span class="t" id="t65" style="left:147.4px;top:423px;font-size:11px;color:#565656;transform:scaleX(0.9446);">PNG file</span>
<span class="t" id="t66" style="left:224.2px;top:423px;font-size:11px;color:#565656;transform:scaleX(0.9475);">850 KB</span>
<div style="left:2px;top:436.2px;width:341px;height:1px;background:#dedede;"></div>
<svg style="left:17.8px;top:439.4px;" width="16.4" height="13.2" viewBox="0 0 16.400 13.200"><rect width="16.400" height="13.200" fill="#5b5b5b"/><rect x="3" y="1.600" width="10.400" height="10" fill="#f0f0f0"/><rect x="0.8" y="1.4" width="1.400" height="1.500" fill="#f0f0f0"/><rect x="0.8" y="4.4" width="1.400" height="1.500" fill="#f0f0f0"/><rect x="0.8" y="7.4" width="1.400" height="1.500" fill="#f0f0f0"/><rect x="0.8" y="10.4" width="1.400" height="1.500" fill="#f0f0f0"/><rect x="14.2" y="1.4" width="1.400" height="1.500" fill="#f0f0f0"/><rect x="14.2" y="4.4" width="1.400" height="1.500" fill="#f0f0f0"/><rect x="14.2" y="7.4" width="1.400" height="1.500" fill="#f0f0f0"/><rect x="14.2" y="10.4" width="1.400" height="1.500" fill="#f0f0f0"/><circle cx="6.400" cy="5" r="2.300" fill="#2a78e4"/><rect x="8" y="5.500" width="4" height="3.600" fill="#e0322c"/><path d="M4.200 10.600l2.400-3.600 2.400 3.600z" fill="#2f9e44"/></svg>
<span class="t" id="t67" style="left:37.1px;top:442px;font-size:11px;color:#565656;transform:scaleX(0.9946);">walldesign</span>
<div style="left:125px;top:442.2px;width:9px;height:8.8px;background:#a9916f;"></div>
<span class="t" id="t68" style="left:147.4px;top:442px;font-size:11px;color:#565656;">Composition</span>
<span class="t" id="t69" style="left:271.9px;top:442px;font-size:11px;color:#565656;transform:scaleX(0.9480);">29.97</span>
<span class="t" id="t70" style="left:322.4px;top:442px;font-size:11px;color:#565656;transform:scaleX(0.9616);">0;00</span>
<div style="left:2px;top:455.2px;width:341px;height:1px;background:#dedede;"></div>
<svg style="left:17.8px;top:458.4px;" width="16.4" height="13.2" viewBox="0 0 16.400 13.200"><rect width="16.400" height="13.200" fill="#5b5b5b"/><rect x="3" y="1.600" width="10.400" height="10" fill="#f0f0f0"/><rect x="0.8" y="1.4" width="1.400" height="1.500" fill="#f0f0f0"/><rect x="0.8" y="4.4" width="1.400" height="1.500" fill="#f0f0f0"/><rect x="0.8" y="7.4" width="1.400" height="1.500" fill="#f0f0f0"/><rect x="0.8" y="10.4" width="1.400" height="1.500" fill="#f0f0f0"/><rect x="14.2" y="1.4" width="1.400" height="1.500" fill="#f0f0f0"/><rect x="14.2" y="4.4" width="1.400" height="1.500" fill="#f0f0f0"/><rect x="14.2" y="7.4" width="1.400" height="1.500" fill="#f0f0f0"/><rect x="14.2" y="10.4" width="1.400" height="1.500" fill="#f0f0f0"/><circle cx="6.400" cy="5" r="2.300" fill="#2a78e4"/><rect x="8" y="5.500" width="4" height="3.600" fill="#e0322c"/><path d="M4.200 10.600l2.400-3.600 2.400 3.600z" fill="#2f9e44"/></svg>
<span class="t" id="t71" style="left:37.1px;top:461px;font-size:11px;color:#565656;">wallkeys</span>
<div style="left:125px;top:461.2px;width:9px;height:8.8px;background:#a9916f;"></div>
<span class="t" id="t72" style="left:147.4px;top:461px;font-size:11px;color:#565656;">Composition</span>
<span class="t" id="t73" style="left:271.9px;top:461px;font-size:11px;color:#565656;transform:scaleX(0.9480);">29.97</span>
<span class="t" id="t74" style="left:322.4px;top:461px;font-size:11px;color:#565656;transform:scaleX(0.9616);">0;00</span>
<div style="left:2px;top:474.2px;width:341px;height:1px;background:#dedede;"></div>
<svg style="left:345px;top:269.3px;" width="13.4" height="12" viewBox="0 0 13.4 12"><rect x="4.400" y="0" width="4.600" height="3.800" fill="#6b6b6b"/><rect x="0" y="8" width="4.600" height="3.800" fill="#6b6b6b"/><rect x="8.800" y="8" width="4.600" height="3.800" fill="#6b6b6b"/><path d="M6.700 3.800v2.400M2.300 8V6.200h8.800V8" fill="none" stroke="#6b6b6b" stroke-width="1"/></svg>
<div style="left:2px;top:704px;width:358px;height:1px;background:#a0a0a0;"></div>
<svg style="left:3px;top:711.2px;" width="18" height="12.6" viewBox="0 0 18 12.6"><path d="M5 0.400h12.600v8.400H5z" fill="#6b6b6b"/><rect x="6.400" y="2.200" width="9.800" height="4.800" fill="#f8f8f8"/><rect x="7.400" y="3.400" width="2.200" height="2.400" fill="#6b6b6b"/><path d="M10.800 4.600h4.400" stroke="#6b6b6b" stroke-width="1.300"/><path d="M0.400 4.400h3.400v5.800h9.200v2H0.400z" fill="#6b6b6b"/><rect x="1.400" y="5.600" width="1.200" height="1.600" fill="#f8f8f8"/><rect x="1.400" y="8.200" width="1.200" height="1.600" fill="#f8f8f8"/></svg>
<svg style="left:29px;top:711px;" width="13.4" height="10.6" viewBox="0 0 13.4 10.6"><path d="M0 1h5l1 1.500h7.400v8.100H0z" fill="#6b6b6b"/><rect width="4.600" height="1.100" fill="#6a6a6a"/></svg>
<svg style="left:51.8px;top:710.6px;" width="15.42" height="12.41" viewBox="0 0 16.400 13.200"><rect width="16.400" height="13.200" fill="#5b5b5b"/><rect x="3" y="1.600" width="10.400" height="10" fill="#f0f0f0"/><rect x="0.8" y="1.4" width="1.400" height="1.500" fill="#f0f0f0"/><rect x="0.8" y="4.4" width="1.400" height="1.500" fill="#f0f0f0"/><rect x="0.8" y="7.4" width="1.400" height="1.500" fill="#f0f0f0"/><rect x="0.8" y="10.4" width="1.400" height="1.500" fill="#f0f0f0"/><rect x="14.2" y="1.4" width="1.400" height="1.500" fill="#f0f0f0"/><rect x="14.2" y="4.4" width="1.400" height="1.500" fill="#f0f0f0"/><rect x="14.2" y="7.4" width="1.400" height="1.500" fill="#f0f0f0"/><rect x="14.2" y="10.4" width="1.400" height="1.500" fill="#f0f0f0"/><circle cx="6.400" cy="5" r="2.300" fill="#2a78e4"/><rect x="8" y="5.500" width="4" height="3.600" fill="#e0322c"/><path d="M4.200 10.600l2.400-3.600 2.400 3.600z" fill="#2f9e44"/></svg>
<svg style="left:76px;top:710px;" width="14" height="13" viewBox="0 0 14 13"><path d="M13.600 0.300c-4.600 0.400-8 2.600-10.200 6.200L0.800 7l2.400 1.600-0.600 1.800 1.800-0.600 1.600 2.400 0.500-2.600c3.600-2.200 6.200-5 7.100-9.300z" fill="#6b6b6b"/><path d="M1 9.800l-0.800 3 3-0.800z" fill="#6b6b6b"/><circle cx="9.600" cy="4.200" r="1.100" fill="#f8f8f8"/></svg>
<div style="left:98.8px;top:708.3px;width:49.5px;height:17.2px;background:#fdfdfd;border:1px solid #e2e2e2;border-radius:4.500px;"></div>
<span class="t" id="t75" style="left:110px;top:712px;font-size:11px;color:#565656;">8 bpc</span>
<svg style="left:157px;top:710.2px;" width="11" height="13" viewBox="0 0 11 13"><path d="M0.500 2.500h10M3.800 2.300V0.800h3.400v1.500M1.600 2.800v9.400h7.800V2.800M3.900 4.800v5.600M5.500 4.800v5.600M7.100 4.800v5.600" fill="none" stroke="#6b6b6b" stroke-width="1"/></svg>
<div style="left:177px;top:708px;width:60.8px;height:16.5px;background:#cfcfcf;"></div>
<div style="left:365px;top:85.1px;width:1242px;height:643.9px;background:#f8f8f8;"></div>
<div style="left:1607px;top:85px;width:4px;height:648.5px;background:#d3d3d3;"></div>
<svg style="left:376.3px;top:95px;" width="5.4" height="5.4" viewBox="0 0 5.4 5.4"><path d="M0.300 0.300l4.800 4.800M5.100 0.300L0.300 5.100" stroke="#555" stroke-width="0.900"/></svg>
<div style="left:390.7px;top:91px;width:10.2px;height:9.8px;background:#a89475;"></div>
<svg style="left:411.6px;top:90.6px;" width="9" height="10" viewBox="0 0 9 10"><rect x="0.500" y="4.600" width="7.200" height="5.200" rx="0.800" fill="#555"/><path d="M5.200 4.600V2.800a1.900 1.900 0 0 1 3.600 -0.600" fill="none" stroke="#555" stroke-width="1.200"/><rect x="3.500" y="6.200" width="1.300" height="2.200" fill="#f8f8f8"/></svg>
<span class="t" id="t76" style="left:430px;top:93px;font-size:11px;color:#3a3a3a;transform:scaleX(0.9732);">Composition</span>
<span class="t" id="t77" style="left:492.2px;top:93px;font-size:11px;color:#2e2e2e;transform:scaleX(1.0229);">finaldesign</span>
<svg style="left:559px;top:94px;" width="8" height="7.2" viewBox="0 0 8 7.2"><path d="M0 .6h8 M0 3.6h8 M0 6.6h8" stroke="#6b6b6b" stroke-width="1.100"/></svg>
<div style="left:384px;top:117.4px;width:86px;height:23.3px;background:#d8d8d8;border-radius:3.500px;"></div>
<span class="t" id="t78" style="left:394.3px;top:125px;font-size:11px;color:#333;">finaldesign</span>
<svg style="left:460.7px;top:125.6px;" width="5.6" height="8.4" viewBox="0 0 5.6 8.4"><path d="M4.800 0.600L1 4.200l3.800 3.600" fill="none" stroke="#6b6b6b" stroke-width="1.500"/></svg>
<span class="t" id="t79" style="left:480px;top:125px;font-size:11px;color:#5c5c5c;transform:scaleX(0.9849);">Pre-comp 1</span>
<div style="left:366px;top:147px;width:1239.8px;height:2.1px;background:#e7e7e7;"></div>
<div style="left:366px;top:149px;width:1239.8px;height:553px;background:#d5d5d5;"></div>
<div style="left:366px;top:702px;width:1239.8px;height:1.6px;background:#e8e8e8;"></div>
<svg width="921" height="434" viewBox="0 0 921 434" style="position:absolute;left:526px;top:208px;display:block">
<rect width="921" height="434" fill="#000"/>
<defs><linearGradient id="rg" x1="0" y1="0" x2="0" y2="1"><stop offset="0" stop-color="#25142a"/><stop offset="0.45" stop-color="#1a0e1d"/><stop offset="1" stop-color="#070408"/></linearGradient></defs>
<clipPath id="wallclip"><polygon points="2.0,90.0 151.0,99.5 223.5,39.0 872.0,134.0 856.0,334.0 279.0,429.0 200.6,352.5 85.5,385.0"/></clipPath>
<polygon fill="#26142a" points="10.0,16.0 921.0,0.0 871.0,421.0 856.0,334.0 872.0,134.0 244.0,13.0 150.0,92.0 21.0,73.0"/>
<polygon fill="url(#rg)" points="872.0,134.0 921.0,0.0 921.0,7.0 871.0,421.0 856.0,334.0"/>
<polygon fill="#4a4a4a" points="1.0,89.0 21.0,73.0 149.0,92.5 245.0,12.5 871.0,129.0 872.0,134.0 223.5,39.0 151.0,99.5 2.0,90.0"/>
<polygon fill="#4a4a4a" points="85.5,385.0 200.6,352.5 279.0,429.0 856.0,334.0 871.0,421.0 74.0,434.0"/>
<polygon fill="#0a00ee" points="2.0,90.0 151.0,99.5 223.5,39.0 872.0,134.0 856.0,334.0 279.0,429.0 200.6,352.5 85.5,385.0"/>
<polygon fill="#0800e6" points="151.0,99.5 223.5,39.0 279.0,429.0 200.6,352.5"/>
<polygon fill="#0a00ee" points="223.5,39.0 225.0,39.0 280.5,429.0 279.0,429.0"/>
<g clip-path="url(#wallclip)">
<polygon fill="#ffffff" points="17.3,90.6 22.0,90.6 51.9,181.3 48.5,183.3"/>
<polygon fill="#ffffff" points="45.8,93.7 51.3,94.7 99.8,195.5 95.3,199.6"/>
<polygon fill="#ffffff" points="66.2,95.7 70.9,95.7 97.8,145.6 93.7,147.7"/>
<polygon fill="#ffffff" points="80.4,95.7 85.9,96.7 117.1,160.9 112.6,162.9"/>
<polygon fill="#ffffff" points="100.8,97.8 104.3,97.8 124.2,167.0 120.8,169.0"/>
<polygon fill="#ffffff" points="128.3,99.8 132.8,100.8 154.8,120.2 142.6,146.6 140.1,142.6 148.3,122.2"/>
<polygon fill="#ffffff" points="20.4,90.6 26.5,91.6 45.8,130.3 46.8,142.6"/>
<polygon fill="#ffffff" points="48.9,95.7 53.4,95.7 50.9,134.4 48.5,130.3"/>
<polygon fill="#ffffff" points="91.6,160.9 97.8,146.6 105.9,169.0 111.0,162.9 124.2,169.0 122.2,189.4 130.3,203.7 122.2,220.0 89.6,220.0 97.8,199.6 89.6,183.3"/>
<polygon fill="#ffffff" points="33.6,186.4 38.7,184.3 67.2,201.6 89.6,211.8 89.6,220.0 67.2,220.0 48.9,203.7"/>
<polygon fill="#ffffff" points="54.0,149.7 59.1,148.7 81.5,173.1 78.4,177.2 55.0,158.9"/>
<polygon fill="#ffffff" points="77.4,173.1 91.6,160.9 93.7,165.0 81.5,179.2"/>
<polygon fill="#ffffff" points="61.1,205.7 67.2,201.6 85.5,220.0 77.4,220.0"/>
<polygon fill="#ffffff" points="77.4,211.8 142.6,203.7 154.8,220.0 67.2,220.0"/>
<polygon fill="#ffffff" points="202.6,55.0 208.1,57.0 222.4,105.9 226.5,122.2 220.0,122.2"/>
<polygon fill="#ffffff" points="228.1,71.3 230.5,73.3 221.4,122.2 218.9,120.2"/>
<polygon fill="#ffffff" points="162.9,85.5 166.0,84.5 179.2,110.0 176.8,111.6"/>
<polygon fill="#ffffff" points="173.1,81.5 176.2,80.4 184.3,105.9 181.9,107.5"/>
<polygon fill="#ffffff" points="184.3,71.3 188.4,70.3 198.6,114.1 201.6,142.6 196.5,142.6"/>
<polygon fill="#ffffff" points="191.4,67.2 194.5,66.2 201.6,91.6 199.2,92.7"/>
<polygon fill="#ffffff" points="183.3,130.3 195.5,122.2 203.7,158.9 207.7,187.4 195.5,203.7 189.4,179.2"/>
<polygon fill="#ffffff" points="156.8,201.6 169.0,203.7 157.8,209.8"/>
<polygon fill="#ffffff" points="234.2,204.7 245.4,212.8 235.2,218.9"/>
<polygon fill="#ffffff" points="154.8,114.1 157.8,113.0 162.9,142.6 160.5,143.6"/>
<polygon fill="#ffffff" points="65.2,214.0 130.3,214.0 140.5,232.3 158.9,214.0 177.2,214.0 179.2,237.4 95.7,247.6 89.6,254.7 81.5,281.2 59.1,288.3 58.7,293.8 77.4,295.5 80.4,299.5 85.5,295.5 105.9,334.2 106.9,376.9 110.0,372.9 111.0,336.2 87.6,338.6 77.4,352.5 75.4,348.4 86.6,339.3 80.4,301.6 59.1,295.5 55.0,287.3 79.4,279.2 85.5,252.7 69.2,218.1"/>
<polygon fill="#ffffff" points="183.3,271.0 203.7,269.0 222.0,238.4 234.2,232.3 232.2,258.8 254.6,281.2 260.7,311.8 240.3,319.9 224.0,311.8 236.3,344.3 258.7,368.8 250.9,372.9 232.2,352.5 215.9,328.1 203.7,309.7 195.5,319.9 191.4,291.4"/>
<polygon fill="#ffffff" points="193.5,214.0 213.8,214.0 224.0,240.5 207.7,267.0 195.5,264.9"/>
<polygon fill="#ffffff" points="234.2,214.0 244.4,214.0 242.4,232.3 232.2,236.4"/>
<polygon fill="#ffffff" points="209.8,328.1 215.9,324.0 230.1,397.3 225.1,393.2"/>
<polygon fill="#ffffff" points="224.0,340.3 229.1,338.2 250.5,397.3 245.4,399.3"/>
<polygon fill="#ffffff" points="240.3,328.1 246.4,328.1 262.7,397.3 256.6,393.2"/>
<polygon fill="#ffffff" points="249.5,291.4 256.6,299.5 262.7,328.1 256.6,328.1"/>
<polygon fill="#ffffff" points="258.7,368.8 263.7,370.8 277.0,417.7 271.9,415.6"/>
<polygon fill="#ffffff" points="215.9,354.5 221.0,356.6 234.2,383.0 229.1,383.0"/>
<polygon fill="#0600c8" points="124.2,214.0 142.6,214.0 146.6,226.2 134.4,236.4"/>
<polygon fill="#0600c8" points="92.7,281.2 101.8,275.1 114.1,309.7 101.8,315.8"/>
<polygon fill="#0600c8" points="81.5,283.2 91.6,281.2 102.9,325.0 89.6,328.1"/>
<polygon fill="#0500b4" points="110.0,179.2 117.1,169.0 120.2,183.3 114.1,189.4"/>
<polygon fill="#0500b4" points="85.5,169.0 91.6,162.9 95.7,177.2 89.6,179.2"/>
<line x1="22.2" y1="92.7" x2="88.9" y2="211.3" stroke="#fff" stroke-width="2.2"/>
<line x1="32.6" y1="94.2" x2="97.8" y2="199.4" stroke="#fff" stroke-width="1.6"/>
<line x1="47.4" y1="94.2" x2="103.7" y2="196.5" stroke="#fff" stroke-width="2.2"/>
<line x1="59.3" y1="95.7" x2="109.7" y2="190.6" stroke="#fff" stroke-width="1.6"/>
<line x1="74.1" y1="95.7" x2="115.6" y2="184.6" stroke="#fff" stroke-width="2.2"/>
<line x1="88.9" y1="97.2" x2="118.6" y2="196.5" stroke="#fff" stroke-width="1.6"/>
<line x1="103.7" y1="97.2" x2="124.5" y2="190.6" stroke="#fff" stroke-width="2.0"/>
<line x1="130.4" y1="98.7" x2="118.6" y2="160.9" stroke="#fff" stroke-width="1.6"/>
<line x1="142.3" y1="98.7" x2="127.4" y2="169.8" stroke="#fff" stroke-width="2.2"/>
<line x1="154.1" y1="100.2" x2="133.4" y2="160.9" stroke="#fff" stroke-width="1.6"/>
<line x1="20.7" y1="94.2" x2="50.4" y2="184.6" stroke="#fff" stroke-width="1.6"/>
<line x1="160.0" y1="101.6" x2="207.5" y2="255.8" stroke="#fff" stroke-width="1.5"/>
<line x1="168.9" y1="92.7" x2="213.4" y2="249.8" stroke="#fff" stroke-width="2.0"/>
<line x1="183.8" y1="89.8" x2="219.3" y2="238.0" stroke="#fff" stroke-width="1.5"/>
<line x1="192.6" y1="83.9" x2="204.5" y2="190.6" stroke="#fff" stroke-width="2.0"/>
<line x1="207.5" y1="77.9" x2="225.3" y2="238.0" stroke="#fff" stroke-width="1.5"/>
<line x1="225.3" y1="75.0" x2="207.5" y2="160.9" stroke="#fff" stroke-width="2.0"/>
<line x1="231.2" y1="72.0" x2="219.3" y2="190.6" stroke="#fff" stroke-width="1.5"/>
<line x1="207.5" y1="303.2" x2="225.3" y2="392.1" stroke="#fff" stroke-width="2.6"/>
<line x1="219.3" y1="309.1" x2="246.0" y2="392.1" stroke="#fff" stroke-width="2.6"/>
<line x1="231.2" y1="306.1" x2="254.0" y2="368.4" stroke="#fff" stroke-width="2.6"/>
<line x1="201.5" y1="297.3" x2="207.5" y2="368.4" stroke="#fff" stroke-width="2.0"/>
<line x1="195.6" y1="279.5" x2="189.7" y2="326.9" stroke="#fff" stroke-width="2.0"/>
<line x1="237.1" y1="279.5" x2="254.0" y2="338.7" stroke="#fff" stroke-width="2.0"/>
<polygon fill="#ffffff" points="88.9,214.3 97.8,205.4 118.6,190.6 124.5,211.3 139.3,232.0 154.1,220.2 166.0,226.1 177.8,238.0 97.8,246.9 91.9,232.0"/>
<polygon fill="#ffffff" points="34.1,187.6 41.5,189.1 91.9,211.3 88.9,217.8 59.3,208.9"/>
<polygon fill="#ffffff" points="57.8,288.4 88.9,267.6 97.8,279.5 80.0,294.3 62.2,294.3"/>
<polygon fill="#ffffff" points="54.8,149.1 68.2,156.5 102.3,202.4 91.9,206.0"/>
<polygon fill="#ffffff" points="75.6,350.6 109.7,332.8 111.1,338.7 78.5,356.5"/>
<polygon fill="#ffffff" points="154.1,220.2 157.1,202.4 170.4,203.9"/>
<polygon fill="#ffffff" points="189.7,249.8 207.5,238.0 231.2,238.0 246.0,211.3 237.1,249.8 254.0,261.7 254.0,297.3 237.1,309.1 225.3,291.3 207.5,309.1 195.6,279.5"/>
<polygon fill="#ffffff" points="234.1,205.4 246.0,211.3 235.6,220.2"/>
<polygon fill="#0600c8" points="124.5,202.4 148.2,211.3 139.3,233.5 127.4,226.1"/>
<polygon fill="#0600c8" points="83.0,169.8 97.8,163.9 106.7,190.6 91.9,196.5"/>
<polygon fill="#0600c8" points="112.6,169.8 124.5,160.9 133.4,184.6 121.5,190.6"/>
<polygon fill="#0600c8" points="83.0,285.4 100.8,279.5 112.6,323.9 94.8,329.9"/>
<polygon fill="#0600c8" points="204.5,261.7 216.4,255.8 225.3,285.4 213.4,291.3"/>
<polygon fill="#0600c8" points="192.6,285.4 204.5,279.5 213.4,309.1 201.5,315.0"/>
<polygon fill="#050505" points="95.7,247.6 179.2,238.0 198.6,352.1 123.8,371.8"/>
<polygon fill="#3a3a3a" points="135.4,254.7 147.7,253.7 148.3,261.9 136.0,262.9"/>
<polygon fill="#2a1f2e" points="167.0,114.0 181.0,110.0 192.0,233.5 181.5,231.5"/>
<polygon fill="#2a1f2e" points="200.6,93.7 215.0,86.6 230.7,231.6 215.0,233.7"/>
<polygon fill="#ffffff" points="449.0,72.0 820.0,126.4 820.0,340.0 449.0,401.0"/>
<polygon fill="#ffffff" points="329.4,54.6 336.5,55.6 349.7,176.8 336.5,176.8"/>
<polygon fill="#ffffff" points="345.6,56.6 376.2,61.7 463.8,127.9 449.5,133.0 455.6,121.8"/>
<polygon fill="#ffffff" points="267.2,172.7 270.3,164.6 335.5,176.8 404.7,184.9 449.5,189.0 449.5,205.3 427.1,202.2 349.7,198.2 341.6,188.0"/>
<polygon fill="#ffffff" points="266.8,169.0 271.9,165.0 299.4,172.1 296.3,179.2"/>
<polygon fill="#ffffff" points="259.1,297.4 403.7,285.1 408.8,283.1 455.6,263.8 455.6,289.2 410.8,288.2 396.6,336.1 423.0,340.1 457.7,338.1 457.7,354.4 380.3,356.4 374.2,360.5 370.1,358.5 384.3,303.5 261.1,305.5"/>
<polygon fill="#ffffff" points="278.4,377.8 374.2,358.5 376.2,362.5 280.5,382.9"/>
<polygon fill="#ffffff" points="254.0,291.2 260.1,299.4 261.1,319.8 254.0,317.7"/>
<polygon fill="#ffffff" points="423.0,340.1 490.3,337.1 508.6,344.2 486.2,352.3 380.3,356.4"/>
<polygon fill="#ffffff" points="486.2,352.3 510.6,344.2 452.6,399.2 427.1,404.3"/>
<path fill="#163c66" d="M717.0 160.0C719.7 161.1 727.2 161.5 729.0 158.0C730.8 154.5 730.3 143.5 728.0 139.0C725.7 134.5 723.7 133.2 715.0 131.0C706.3 128.8 686.5 125.2 676.0 125.5C665.5 125.8 658.2 129.3 652.0 133.0C645.8 136.7 643.0 141.0 638.5 147.5C634.0 154.0 627.9 164.2 625.0 172.0C622.1 179.8 620.3 187.2 621.0 194.0C621.7 200.8 623.8 206.5 629.0 213.0C634.2 219.5 644.2 227.0 652.0 233.0C659.8 239.0 669.3 244.2 676.0 249.0C682.7 253.8 688.0 256.7 692.0 262.0C696.0 267.3 699.7 275.3 700.0 281.0C700.3 286.7 698.8 291.2 694.0 296.0C689.2 300.8 677.2 310.0 671.0 310.0C664.8 310.0 659.5 301.5 657.0 296.0C654.5 290.5 657.7 283.3 656.0 277.0C654.3 270.7 651.0 261.3 647.0 258.0C643.0 254.7 636.5 256.2 632.0 257.0C627.5 257.8 622.7 259.7 620.0 263.0C617.3 266.3 616.3 271.8 616.0 277.0C615.7 282.2 614.7 288.5 618.0 294.0C621.3 299.5 628.5 306.1 636.0 310.0C643.5 313.9 654.0 315.5 663.0 317.5C672.0 319.5 679.7 323.2 690.0 322.0C700.3 320.8 716.2 316.9 725.0 310.0C733.8 303.1 739.5 290.4 742.6 280.6C745.7 270.8 744.4 259.3 743.5 251.4C742.6 243.5 741.4 239.4 737.0 233.0C732.6 226.6 724.4 219.1 717.0 213.0C709.6 206.9 699.7 201.2 692.5 196.4C685.3 191.6 678.4 188.7 674.0 184.0C669.6 179.3 667.2 173.4 666.0 168.0C664.8 162.6 665.3 156.2 667.0 151.6C668.7 147.0 671.1 141.7 676.0 140.4C680.9 139.0 690.4 141.6 696.6 143.5C702.8 145.4 709.6 148.9 713.0 151.6C716.4 154.4 714.3 158.9 717.0 160.0Z"/>
<polyline fill="none" stroke="#000" stroke-width="4.6" stroke-linejoin="round" points="321.2,294.3 341.6,303.5"/>
<polyline fill="none" stroke="#000" stroke-width="5.0" stroke-linejoin="round" points="370.1,287.2 396.6,334.0"/>
<polyline fill="none" stroke="#000" stroke-width="5.0" stroke-linejoin="round" points="403.7,279.0 404.7,307.5"/>
<polyline fill="none" stroke="#000" stroke-width="5.0" stroke-linejoin="round" points="439.3,287.2 455.6,264.8 492.3,281.1 503.5,277.0"/>
<polyline fill="none" stroke="#000" stroke-width="5.6" stroke-linejoin="round" points="503.5,256.6 503.5,281.1"/>
<polyline fill="none" stroke="#000" stroke-width="5.0" stroke-linejoin="round" points="380.3,329.9 396.6,338.1"/>
<polyline fill="none" stroke="#000" stroke-width="5.0" stroke-linejoin="round" points="336.5,166.6 349.7,158.5"/>
<polyline fill="none" stroke="#000" stroke-width="5.3" stroke-linejoin="round" points="297.8,174.7 327.3,180.9 404.7,182.9"/>
<polyline fill="none" stroke="#000" stroke-width="5.6" stroke-linejoin="round" points="406.7,184.9 406.7,201.2"/>
<polyline fill="none" stroke="#000" stroke-width="4.6" stroke-linejoin="round" points="441.4,211.4 461.7,205.3"/>
<polyline fill="none" stroke="#000" stroke-width="4.6" stroke-linejoin="round" points="482.1,212.4 490.3,205.3"/>
<polyline fill="none" stroke="#000" stroke-width="5.3" stroke-linejoin="round" points="503.5,205.3 503.5,213.4"/>
<circle cx="406.7" cy="346.2" r="15.2" fill="#000"/>
<ellipse cx="312.5" cy="298.0" rx="15.5" ry="6.2" fill="#000"/>
<polygon fill="#0a00ee" points="414.0,67.0 487.3,77.8 455.7,120.3 414.0,92.0"/>
<polygon fill="#0a00ee" points="414.0,101.2 455.7,128.7 440.7,191.2 414.0,188.7"/>
<polygon fill="#0600c8" points="464.0,130.3 499.0,80.3 507.3,83.7 548.2,152.0 469.0,134.5"/>
<polygon fill="#0a00ee" points="520.7,82.0 569.8,101.2 613.2,168.7 563.2,168.7"/>
<polygon fill="#0a00ee" points="584.0,94.5 638.2,101.2 637.3,162.0 622.3,162.0"/>
<polygon fill="#0a00ee" points="435.7,203.7 454.8,148.7 545.7,177.0 562.3,209.5"/>
<polygon fill="#0a00ee" points="414.0,202.8 427.3,202.8 445.7,213.7 563.2,212.8 554.0,242.0 414.0,242.0"/>
<polygon fill="#0500b4" points="556.5,197.0 603.2,175.3 576.5,207.0"/>
<polygon fill="#0500b4" points="582.3,168.7 622.3,165.3 619.0,205.3 596.5,183.7"/>
<polygon fill="#0500b4" points="626.5,182.8 637.3,157.0 652.3,160.3 650.7,166.2"/>
<polygon fill="#ffffff" points="414.0,92.0 455.7,120.3 455.7,128.7 414.0,101.2"/>
<polygon fill="#ffffff" points="404.0,86.2 414.0,92.0 414.0,101.2 404.0,94.5"/>
<polygon fill="#0a00ee" points="554.0,95.6 572.3,102.7 615.1,163.8 619.2,165.9 588.6,169.9 563.2,167.9 554.0,151.6"/>
<polygon fill="#0a00ee" points="584.5,93.6 638.5,101.7 640.6,157.7 635.5,161.8 623.2,159.8"/>
<polygon fill="#0a00ee" points="650.7,101.7 672.1,105.8 658.9,148.6"/>
<polygon fill="#0a00ee" points="684.3,106.8 724.1,113.9 704.7,145.5 679.3,161.8"/>
<polygon fill="#0600c8" points="728.1,113.9 743.4,116.0 746.5,169.9 733.2,171.0 731.2,161.8 736.3,143.5"/>
<polygon fill="#0a00ee" points="746.5,125.1 757.7,118.0 797.4,123.1 805.5,131.2 774.0,157.7 749.5,172.0 745.4,147.5"/>
<polygon fill="#0a00ee" points="750.5,173.0 811.6,136.3 815.7,174.0 766.8,194.4 757.7,186.2"/>
<polygon fill="#0a00ee" points="818.8,127.2 871.7,133.3 870.7,147.5 824.9,163.8"/>
<polygon fill="#0a00ee" points="822.8,167.9 870.7,149.6 867.6,210.7 820.8,206.6"/>
<polygon fill="#0a00ee" points="820.8,214.7 866.6,212.7 859.5,263.6 835.1,249.4 824.9,224.9"/>
<polygon fill="#0a00ee" points="740.4,204.6 758.7,192.3 777.0,202.5 778.0,218.8 752.6,233.1"/>
<polygon fill="#0a00ee" points="780.1,202.5 820.8,189.3 820.8,216.8 808.6,222.9 784.1,224.9"/>
<polygon fill="#0500b4" points="702.7,220.9 730.2,207.6 734.2,237.2"/>
<polygon fill="#0500b4" points="675.2,164.9 711.8,190.3 712.9,194.4 675.2,186.2"/>
<polygon fill="#0500b4" points="709.8,154.7 727.1,161.8 726.1,196.4 721.0,192.3"/>
<polygon fill="#0500b4" points="727.1,176.1 745.4,179.1 746.5,187.3 743.4,189.3"/>
<polygon fill="#0500b4" points="626.3,182.2 641.6,155.7 652.8,161.8 629.4,184.2"/>
<polygon fill="#0500b4" points="554.0,197.4 596.8,175.0 615.1,165.9 620.2,166.9 619.2,207.6 595.8,185.2 576.4,206.6 560.1,202.5"/>
<polygon fill="#0a00ee" points="554.0,213.7 563.2,212.7 557.1,239.2 554.0,241.2"/>
<polygon fill="#0a00ee" points="562.1,271.8 578.4,244.3 592.7,252.4 593.7,271.8 574.4,282.0 562.1,282.0"/>
<polygon fill="#0500b4" points="695.5,274.8 729.2,257.5 724.1,282.0 708.8,282.0"/>
<polygon fill="#0600c8" points="737.3,272.8 749.5,244.3 753.6,245.3 752.6,261.6 741.4,273.8"/>
<polygon fill="#0a00ee" points="757.7,247.3 770.9,241.2 770.9,282.0 757.7,273.8"/>
<polygon fill="#0a00ee" points="788.2,243.3 820.8,220.9 835.1,250.4 859.5,263.6 855.4,267.7 828.9,257.5 824.9,282.0 808.6,282.0 808.6,247.3"/>
<polygon fill="#0a00ee" points="561.8,272.8 580.2,243.7 592.9,251.4 593.9,270.9"/>
<polygon fill="#0a00ee" points="558.9,279.6 593.9,283.5 595.8,296.2 570.5,305.9 569.6,284.5"/>
<polygon fill="#0500b4" points="582.2,305.9 595.8,325.3 629.8,329.2 625.9,339.9 583.2,337.0 577.3,321.4"/>
<polygon fill="#0a00ee" points="575.4,340.9 595.8,333.1 595.8,368.1 575.4,375.9"/>
<polygon fill="#0a00ee" points="618.2,358.4 639.5,356.4 639.5,366.1 624.0,371.0"/>
<polygon fill="#0a00ee" points="655.1,313.6 665.8,320.5 662.9,325.3 655.1,333.1"/>
<polygon fill="#0a00ee" points="655.1,337.0 668.7,330.2 678.4,361.3 655.1,366.1"/>
<polygon fill="#0500b4" points="695.9,273.8 728.0,258.2 714.4,284.5"/>
<polygon fill="#0500b4" points="673.6,306.8 699.8,289.3 694.0,306.8 676.5,311.7"/>
<polygon fill="#0500b4" points="731.9,286.4 751.3,275.2 761.0,287.4 735.8,300.0"/>
<polygon fill="#0600c8" points="737.7,268.9 749.4,244.6 753.3,244.6 752.3,257.3 743.5,273.8"/>
<polygon fill="#0a00ee" points="721.2,232.0 735.8,232.0 731.9,237.8"/>
<polygon fill="#0a00ee" points="758.1,249.5 767.8,243.7 767.8,278.7 760.1,274.8 757.1,267.0"/>
<polygon fill="#0a00ee" points="727.0,309.8 760.1,290.3 765.9,290.3 764.9,319.5 756.2,323.4"/>
<polygon fill="#0a00ee" points="692.0,333.1 705.6,320.5 718.3,314.6 736.7,350.6 703.7,356.4 702.7,346.7"/>
<polygon fill="#0a00ee" points="723.1,319.5 764.0,327.3 763.0,344.8 738.7,349.6"/>
<polygon fill="#0a00ee" points="781.4,321.4 790.2,332.1 789.2,340.9 779.5,342.8"/>
<polygon fill="#0a00ee" points="782.4,247.6 797.0,246.6 797.0,278.7 781.4,282.5"/>
<polygon fill="#0a00ee" points="781.4,290.3 797.0,296.2 796.0,305.9 780.5,313.6"/>
<polygon fill="#0a00ee" points="780.5,317.5 795.1,313.6 791.2,337.0 777.6,340.9"/>
<polygon fill="#0a00ee" points="678.4,348.6 694.0,354.5 690.1,360.3 680.4,361.3"/>
<polygon fill="#0a00ee" points="361.9,222.0 559.5,222.0 553.4,249.5 508.6,257.6 492.3,248.5 408.8,283.1 384.3,254.6"/>
<polygon fill="#0600c8" points="410.8,288.2 497.4,287.2 496.4,336.1 490.3,337.1 396.6,336.1"/>
<polygon fill="#0600c8" points="376.2,357.4 486.2,352.3 427.1,404.3 404.7,408.4"/>
<polygon fill="#0a00ee" points="452.6,399.2 510.6,344.2 513.7,387.0"/>
<polygon fill="#0a00ee" points="500.4,277.0 549.3,279.0 551.4,284.1 506.5,288.2 503.5,306.5"/>
<polygon fill="#0a00ee" points="562.6,272.9 574.0,252.5 574.0,275.0"/>
<polygon fill="#ffffff" points="816.7,123.1 820.8,123.1 825.9,163.8 870.7,147.5 870.7,150.0 822.8,167.9 820.8,206.6 867.6,210.7 866.6,213.1 820.8,215.2 816.7,204.6"/>
<polygon fill="#ffffff" points="825.2,259.2 830.0,252.4 856.3,263.1 852.4,269.9 832.0,259.2 828.1,266.0"/>
<polygon fill="#ffffff" points="804.8,290.3 815.5,296.2 814.5,303.9 803.8,309.8"/>
<polygon fill="#ffffff" points="843.7,319.5 855.3,325.3 854.3,329.2 841.7,323.4"/>
<polyline fill="none" stroke="#04008e" stroke-width="1.6" points="324.3,52.5 334.4,176.8"/>
<polyline fill="none" stroke="#04008e" stroke-width="1.2" points="254.0,162.5 270.3,164.6 254.0,194.1"/>
<polyline fill="none" stroke="#04008e" stroke-width="1.6" points="454.6,133.0 437.3,203.3"/>
<polyline fill="none" stroke="#04008e" stroke-width="1.4" points="341.6,188.0 368.1,242.0"/>
<polyline fill="none" stroke="#04008e" stroke-width="1.2" points="427.1,202.2 488.2,242.0"/>
<polyline fill="none" stroke="#04008e" stroke-width="1.2" points="254.0,205.3 280.5,225.7 274.4,242.0"/>
<polyline fill="none" stroke="#04008e" stroke-width="1.4" points="488.2,78.0 455.6,121.8"/>
<polyline fill="none" stroke="#04008e" stroke-width="1.2" points="463.8,129.9 548.3,151.3 500.4,80.0"/>
<polyline fill="none" stroke="#04008e" stroke-width="1.4" points="280.5,226.1 260.1,289.2"/>
<polyline fill="none" stroke="#04008e" stroke-width="1.4" points="361.9,222.0 400.6,281.1"/>
<polyline fill="none" stroke="#04008e" stroke-width="1.8" points="384.3,303.5 370.1,358.5"/>
<polyline fill="none" stroke="#04008e" stroke-width="1.4" points="254.0,258.7 280.5,340.1 272.3,372.7 304.9,423.6"/>
<polyline fill="none" stroke="#04008e" stroke-width="1.8" points="376.2,358.5 404.7,408.4"/>
<polyline fill="none" stroke="#04008e" stroke-width="1.6" points="410.8,288.2 396.6,336.1"/>
<polyline fill="none" stroke="#04008e" stroke-width="1.4" points="497.4,287.2 496.4,336.1"/>
<polyline fill="none" stroke="#04008e" stroke-width="1.2" points="492.3,248.5 408.8,283.1"/>
<polyline fill="none" stroke="#04008e" stroke-width="1.2" points="228.1,40.7 242.4,38.7 227.1,63.1 247.5,105.9"/>
<polyline fill="none" stroke="#04008e" stroke-width="1.2" points="242.4,158.9 270.9,165.0 248.5,203.7"/>
<polygon fill="#6f6c76" points="506.5,288.2 569.7,284.0 575.4,377.8 514.7,388.0"/>
<polygon fill="#85838c" points="507.5,289.2 568.7,285.0 570.1,306.5 509.5,312.2"/>
<polygon fill="#0b0b0d" points="515.7,319.8 536.1,317.7 537.1,352.3 518.8,355.4"/>
<polygon fill="#0b0b0d" points="544.2,316.7 567.6,314.7 569.7,346.2 546.3,350.3"/>
<polygon fill="#0b0b0d" points="518.8,360.5 538.1,357.4 539.1,381.9 520.8,384.9"/>
<polygon fill="#0b0b0d" points="547.3,355.4 570.7,352.3 571.7,377.8 548.3,380.9"/>
<polygon fill="#6f6c76" points="817.4,268.0 847.5,266.0 841.7,333.0 813.5,338.0"/>
<polygon fill="#85838c" points="818.4,269.0 846.5,267.0 845.2,280.7 817.5,283.4"/>
<polygon fill="#0b0b0d" points="819.4,289.3 828.1,288.4 827.1,308.8 818.4,309.8"/>
<polygon fill="#0b0b0d" points="833.0,287.4 842.7,286.4 841.3,306.8 832.0,307.8"/>
<polygon fill="#0b0b0d" points="818.0,315.6 826.6,314.6 825.8,332.1 816.8,333.1"/>
<polygon fill="#0b0b0d" points="831.6,313.6 840.7,311.7 839.4,329.2 830.4,331.1"/>
<polygon fill="#6a6570" points="591.7,214.7 615.1,214.7 616.2,372.0 597.7,373.5"/>
<polygon fill="#08080a" points="594.3,217.3 612.5,217.3 613.6,370.0 600.3,371.5"/>
<polygon fill="#5a5660" points="595.7,294.0 614.7,294.0 614.7,296.0 595.7,296.0"/>
<polygon fill="#6a6570" points="635.5,215.2 655.2,215.2 655.0,366.0 639.5,367.5"/>
<polygon fill="#08080a" points="638.1,217.8 652.6,217.8 652.4,364.0 642.1,365.5"/>
<polygon fill="#5a5660" points="638.5,292.0 654.1,292.0 654.1,294.0 638.5,294.0"/>
<polygon fill="#6a6570" points="770.3,216.6 784.1,216.3 778.5,344.8 764.0,346.5"/>
<polygon fill="#08080a" points="772.9,219.2 781.5,218.9 775.9,342.8 766.6,344.5"/>
<polygon fill="#5a5660" points="768.1,281.0 780.3,281.0 780.3,283.0 768.1,283.0"/>
<polygon fill="#6a6570" points="796.4,216.3 810.2,216.1 800.9,341.8 789.2,343.5"/>
<polygon fill="#08080a" points="799.0,218.9 807.6,218.7 798.3,339.8 791.8,341.5"/>
<polygon fill="#5a5660" points="793.8,279.0 804.5,279.0 804.5,281.0 793.8,281.0"/>
</g>
</svg>
<span class="t" id="t80" style="left:394.2px;top:713px;font-size:11px;color:#1473e6;transform:scaleX(0.9150);">43.8</span>
<span class="t" id="t81" style="left:420.8px;top:713px;font-size:11px;color:#565656;transform:scaleX(0.9406);">%</span>
<div style="left:444.5px;top:708.8px;width:18.8px;height:17.6px;background:#fdfdfd;border:1px solid #e2e2e2;border-radius:4.500px;"></div>
<svg style="left:449.2px;top:714.6px;" width="9.6" height="6.4" viewBox="0 0 9.6 6.4"><path d="M0.600 0.600L4.8 5.4L9 0.600" fill="none" stroke="#4c4c4c" stroke-width="1.9"/></svg>
<div style="left:472.5px;top:709px;width:1.5px;height:17px;background:#e2e2e2;"></div>
<div style="left:482.5px;top:708.8px;width:89px;height:17.6px;background:#fdfdfd;border:1px solid #e2e2e2;border-radius:4.500px;"></div>
<span class="t" id="t82" style="left:491.3px;top:713px;font-size:11px;color:#565656;transform:scaleX(1.0227);">(Half)</span>
<svg style="left:553.2px;top:714.6px;" width="9.6" height="6.4" viewBox="0 0 9.6 6.4"><path d="M0.600 0.600L4.8 5.4L9 0.600" fill="none" stroke="#4c4c4c" stroke-width="1.9"/></svg>
<div style="left:580px;top:709px;width:1.5px;height:17px;background:#e2e2e2;"></div>
<div style="left:590px;top:707.5px;width:19.5px;height:19.5px;background:#d9d9d9;border-radius:3.500px;"></div>
<svg style="left:592.5px;top:710.5px;" width="15" height="13" viewBox="0 0 15 13"><rect x="0.700" y="0.700" width="13" height="11" fill="none" stroke="#505050" stroke-width="1.300"/><path d="M8 2.300L4.600 7h2.600l-1 3.600L10 5.800H7.300z" fill="#505050"/><path d="M10.500 9.800h3l-1.500 2z" fill="#505050"/></svg>
<svg style="left:617px;top:711px;" width="14.5" height="12" viewBox="0 0 14.5 12"><rect x="0.600" y="0.600" width="13.200" height="10.800" fill="#f2f2f2" stroke="#555" stroke-width="1.100"/><rect x="1.2" y="1.2" width="3.100" height="2.600" fill="#9a9a9a"/><rect x="1.2" y="6.4" width="3.100" height="2.600" fill="#9a9a9a"/><rect x="4.3" y="3.8" width="3.100" height="2.600" fill="#9a9a9a"/><rect x="4.3" y="9" width="3.100" height="2.600" fill="#9a9a9a"/><rect x="7.4" y="1.2" width="3.100" height="2.600" fill="#9a9a9a"/><rect x="7.4" y="6.4" width="3.100" height="2.600" fill="#9a9a9a"/><rect x="10.5" y="3.8" width="3.100" height="2.600" fill="#9a9a9a"/><rect x="10.5" y="9" width="3.100" height="2.600" fill="#9a9a9a"/></svg>
<div style="left:638px;top:707.5px;width:19.5px;height:19.5px;background:#d9d9d9;border-radius:3.500px;"></div>
<svg style="left:640.5px;top:710.5px;" width="15" height="13.5" viewBox="0 0 15 13.5"><path d="M3.400 1.600l9.400 0.800-1 8.800L1.600 10.400z" fill="none" stroke="#505050" stroke-width="1.400"/><path d="M2.400 0.400v2.400M0.900 1.600h2.800M12.800 0.900v3M11.400 2.400h2.900M1.600 9v3M0.300 10.400h2.800M11.800 9.600v3M10.400 11.200h2.900" stroke="#505050" stroke-width="1"/></svg>
<svg style="left:665px;top:711px;" width="14.5" height="12" viewBox="0 0 14.5 12"><rect x="0.600" y="0.600" width="13.200" height="10.800" fill="none" stroke="#505050" stroke-width="1.200"/><rect x="3.800" y="3.400" width="6.800" height="5.200" fill="#505050"/></svg>
<svg style="left:688.6px;top:710px;" width="15" height="15" viewBox="0 0 15 15"><rect x="1.800" y="1.800" width="10.400" height="8.400" fill="none" stroke="#505050" stroke-width="1.200"/><path d="M7 0v12M0 6h14" stroke="#505050" stroke-width="0.900" stroke-dasharray="2.400 1.200"/><path d="M10 12.200h3.600l-1.800 2.200z" fill="#505050"/></svg>
<div style="left:714px;top:709px;width:1.5px;height:17px;background:#e2e2e2;"></div>
<svg style="left:727.5px;top:710px;" width="14" height="15" viewBox="0 0 14 15"><circle cx="6.400" cy="3.600" r="3.300" fill="#f02020"/><circle cx="3.800" cy="8" r="3.300" fill="#22b24c"/><circle cx="9" cy="8" r="3.300" fill="#2a5cff"/><path d="M9 12.400h3.600l-1.800 2.200z" fill="#505050"/></svg>
<svg style="left:751px;top:711px;" width="14" height="14" viewBox="0 0 14 14"><circle cx="7" cy="7" r="5.600" fill="none" stroke="#555" stroke-width="2.200" stroke-dasharray="4.400 1.460"/><circle cx="7" cy="7" r="2.600" fill="none" stroke="#555" stroke-width="1"/></svg>
<span class="t" id="t83" style="left:774.3px;top:713px;font-size:11px;color:#1473e6;transform:scaleX(0.9531);">+0.0</span>
<div style="left:814.5px;top:709px;width:1.5px;height:17px;background:#e2e2e2;"></div>
<svg style="left:827px;top:711.5px;" width="14.5" height="12" viewBox="0 0 14.5 12"><path d="M0.400 2.600h3.400l1.200-2h4.600l1.200 2h3.400v9H0.400z" fill="#505050"/><circle cx="7.300" cy="6.800" r="2.700" fill="none" stroke="#f8f8f8" stroke-width="1.300"/></svg>
<svg style="left:850px;top:709.5px;" width="16" height="14" viewBox="0 0 16 14"><circle cx="6.200" cy="8.600" r="4.200" fill="none" stroke="#b0b0b0" stroke-width="2"/><circle cx="6.200" cy="8.600" r="1.300" fill="#b0b0b0"/><path d="M8.500 2.200h3l0.800-1.600h2l0.600 1.600v4.600h-2" fill="none" stroke="#b0b0b0" stroke-width="1.400"/></svg>
<div style="left:875.5px;top:709px;width:1.5px;height:17px;background:#e2e2e2;"></div>
<div style="left:886.5px;top:708.8px;width:67.5px;height:17.6px;background:#fdfdfd;border:1px solid #e2e2e2;border-radius:4.500px;"></div>
<span class="t" id="t84" style="left:895.2px;top:713px;font-size:11px;color:#565656;transform:scaleX(0.9769);">0;00;00;05</span>
<div style="left:964.5px;top:709px;width:1.5px;height:17px;background:#e2e2e2;"></div>
<div style="left:1610.8px;top:85.1px;width:309.2px;height:372.9px;background:#f8f8f8;"></div>
<div style="left:1610.8px;top:458px;width:309.2px;height:4px;background:#d3d3d3;"></div>
<div style="left:1610.8px;top:462px;width:309.2px;height:570px;background:#f8f8f8;"></div>
<span class="t" id="t85" style="left:1623.4px;top:92px;font-size:11px;color:#2e2e2e;transform:scaleX(0.9789);">Preview</span>
<svg style="left:1671.8px;top:93.8px;" width="8.5" height="7.2" viewBox="0 0 8.5 7.2"><path d="M0 .6h8.5 M0 3.6h8.5 M0 6.6h8.5" stroke="#6b6b6b" stroke-width="1.100"/></svg>
<svg style="left:1657.5px;top:118px;" width="13" height="9.4" viewBox="0 0 13 9.4"><rect x="0" y="0" width="1.800" height="9.400" fill="#6b6b6b"/><path d="M12.600 0v9.400L3.400 4.700z" fill="#6b6b6b"/></svg>
<svg style="left:1680.8px;top:118px;" width="13" height="9.4" viewBox="0 0 13 9.4"><path d="M8.400 0v9.400L0 4.700z" fill="#6b6b6b"/><rect x="10.400" y="0" width="1.800" height="9.400" fill="#6b6b6b"/></svg>
<svg style="left:1706.7px;top:118px;" width="10" height="9.4" viewBox="0 0 10 9.4"><path d="M0 0v9.400l9.600-4.700z" fill="#6b6b6b"/></svg>
<svg style="left:1729.7px;top:118px;" width="13" height="9.4" viewBox="0 0 13 9.4"><rect x="0" y="0" width="1.800" height="9.400" fill="#6b6b6b"/><path d="M4.200 0v9.400l8.600-4.700z" fill="#6b6b6b"/></svg>
<svg style="left:1753.7px;top:118px;" width="13" height="9.4" viewBox="0 0 13 9.4"><path d="M0 0v9.400l9.200-4.700z" fill="#6b6b6b"/><rect x="10.800" y="0" width="1.800" height="9.400" fill="#6b6b6b"/></svg>
<div style="left:1617px;top:137.4px;width:195px;height:1.4px;background:#e6e6e6;"></div>
<span class="t" id="t86" style="left:1617.2px;top:148px;font-size:11px;color:#565656;transform:scaleX(0.9959);">Shortcut</span>
<div style="left:1617px;top:161.4px;width:168.5px;height:19.2px;background:#fdfdfd;border:1px solid #e2e2e2;border-radius:4.500px;"></div>
<span class="t" id="t87" style="left:1625.8px;top:166px;font-size:11px;color:#565656;transform:scaleX(0.9449);">Spacebar</span>
<svg style="left:1767px;top:168.2px;" width="10" height="6.6" viewBox="0 0 10 6.6"><path d="M0.600 0.600L5 5.6L9.4 0.600" fill="none" stroke="#4c4c4c" stroke-width="1.9"/></svg>
<svg style="left:1794px;top:164.6px;" width="13.4" height="12.6" viewBox="0 0 13.4 12.6"><path d="M3.200 7.400a4.600 4.600 0 1 1 3.600 3.200" fill="none" stroke="#6b6b6b" stroke-width="1.300"/><path d="M0.400 4.600l2.600 4 3-3.400z" fill="#6b6b6b"/><path d="M0.600 12h12.400" stroke="#6b6b6b" stroke-width="1.100"/></svg>
<span class="t" id="t88" style="left:1617.2px;top:192px;font-size:11px;color:#565656;transform:scaleX(0.9888);">Include:</span>
<div style="left:1712px;top:185px;width:21.7px;height:19.7px;background:#d6d6d6;border-radius:3.500px;"></div>
<svg style="left:1716px;top:189.6px;" width="14" height="10.4" viewBox="0 0 14 10.4"><path d="M0.700 5.200C2.400 2 4.600 0.800 7 0.800s4.600 1.200 6.300 4.400C11.600 8.400 9.400 9.600 7 9.600S2.400 8.400 0.700 5.200z" fill="none" stroke="#3c3c3c" stroke-width="1.500"/><circle cx="7" cy="4.800" r="2.600" fill="none" stroke="#3c3c3c" stroke-width="1.400"/><circle cx="8" cy="3.800" r="0.700" fill="#3c3c3c"/></svg>
<div style="left:1736px;top:185px;width:22px;height:19.7px;background:#d6d6d6;border-radius:3.500px;"></div>
<svg style="left:1737.5px;top:187.5px;" width="19.5" height="15" viewBox="0 0 19.5 15"><path d="M0.600 5h3.200L8.400 0.800v13.400L3.800 10H0.600z" fill="#3c3c3c"/><path d="M10.400 4.600a4 4 0 0 1 0 5.800M12.800 2.800a6.600 6.600 0 0 1 0 9.400M15.200 1a9.400 9.400 0 0 1 0 13" fill="none" stroke="#3c3c3c" stroke-width="1.200"/></svg>
<svg style="left:1763.5px;top:187.8px;" width="15" height="15" viewBox="0 0 15 15"><rect x="2.200" y="2.200" width="10.600" height="10.600" fill="none" stroke="#6b6b6b" stroke-width="1.200"/><path d="M0.400 2.200h3.600M2.200 0.400v3.600M11 2.200h3.600M12.800 0.400v3.600M0.400 12.800h3.600M2.200 11v3.600M11 12.800h3.600M12.800 11v3.600" stroke="#6b6b6b" stroke-width="1"/><circle cx="7.500" cy="7.500" r="1" fill="#6b6b6b"/></svg>
<svg style="left:1793.6px;top:188.4px;" width="14.8" height="13.2" viewBox="0 0 14.8 13.2"><path d="M3 5.400H0.800v7h13.200v-7H11.800" fill="none" stroke="#6b6b6b" stroke-width="1.500"/><path d="M4.200 8.400c0-3.200 1.600-4.800 4.600-4.800V1l4.200 3.800-4.200 3.800V6c-2.200 0-3.600 0.600-4.600 2.400z" fill="#6b6b6b"/></svg>
<div style="left:1617.4px;top:212.8px;width:11.6px;height:11.6px;background:#fdfdfd;border:1.900px solid #5a5a5a;border-radius:2.600px;"></div>
<span class="t" id="t89" style="left:1638.3px;top:214px;font-size:11px;color:#565656;transform:scaleX(0.9543);">Cache Before Playback</span>
<span class="t" id="t90" style="left:1617.2px;top:233px;font-size:11px;color:#565656;transform:scaleX(0.9438);">Range</span>
<div style="left:1617px;top:248.4px;width:195px;height:18.2px;background:#fdfdfd;border:1px solid #e2e2e2;border-radius:4.500px;"></div>
<span class="t" id="t91" style="left:1626.3px;top:253px;font-size:11px;color:#565656;transform:scaleX(0.9620);">Work Area Extended By Current...</span>
<svg style="left:1793px;top:254.6px;" width="10" height="6.6" viewBox="0 0 10 6.6"><path d="M0.600 0.600L5 5.6L9.4 0.600" fill="none" stroke="#4c4c4c" stroke-width="1.9"/></svg>
<span class="t" id="t92" style="left:1617.2px;top:274px;font-size:11px;color:#565656;transform:scaleX(0.9736);">Play From</span>
<div style="left:1617px;top:290px;width:195px;height:17.8px;background:#fdfdfd;border:1px solid #e2e2e2;border-radius:4.500px;"></div>
<span class="t" id="t93" style="left:1626px;top:294px;font-size:11px;color:#565656;transform:scaleX(1.0066);">Current Time</span>
<svg style="left:1793px;top:296px;" width="10" height="6.6" viewBox="0 0 10 6.6"><path d="M0.600 0.600L5 5.6L9.4 0.600" fill="none" stroke="#4c4c4c" stroke-width="1.9"/></svg>
<span class="t" id="t94" style="left:1617.2px;top:315px;font-size:11px;color:#565656;transform:scaleX(0.9556);">Frame Rate</span>
<span class="t" id="t95" style="left:1687.7px;top:315px;font-size:11px;color:#565656;transform:scaleX(0.9623);">Skip</span>
<span class="t" id="t96" style="left:1738.3px;top:315px;font-size:11px;color:#565656;transform:scaleX(0.9811);">Resolution</span>
<div style="left:1617px;top:329.2px;width:67.5px;height:17.8px;background:#fdfdfd;border:1px solid #e2e2e2;border-radius:4.500px;"></div>
<div style="left:1661.4px;top:330px;width:1px;height:16.2px;background:#e2e2e2;"></div>
<span class="t" id="t97" style="left:1626px;top:333px;font-size:11px;color:#565656;transform:scaleX(0.9753);">(29.97)</span>
<svg style="left:1667.8px;top:335.2px;" width="10" height="6.6" viewBox="0 0 10 6.6"><path d="M0.600 0.600L5 5.6L9.4 0.600" fill="none" stroke="#4c4c4c" stroke-width="1.9"/></svg>
<div style="left:1688.3px;top:329.2px;width:46px;height:17.8px;background:#fdfdfd;border:1px solid #e2e2e2;border-radius:4.500px;"></div>
<div style="left:1711.6px;top:330px;width:1px;height:16.2px;background:#e2e2e2;"></div>
<span class="t" id="t98" style="left:1696.8px;top:333px;font-size:11px;color:#565656;transform:scaleX(1.0776);">0</span>
<svg style="left:1717.6px;top:335.2px;" width="10" height="6.6" viewBox="0 0 10 6.6"><path d="M0.600 0.600L5 5.6L9.4 0.600" fill="none" stroke="#4c4c4c" stroke-width="1.9"/></svg>
<div style="left:1738.3px;top:329.2px;width:73.5px;height:17.8px;background:#fdfdfd;border:1px solid #e2e2e2;border-radius:4.500px;"></div>
<span class="t" id="t99" style="left:1747.3px;top:333px;font-size:11px;color:#565656;">Auto</span>
<svg style="left:1792.6px;top:335.2px;" width="10" height="6.6" viewBox="0 0 10 6.6"><path d="M0.600 0.600L5 5.6L9.4 0.600" fill="none" stroke="#4c4c4c" stroke-width="1.9"/></svg>
<div style="left:1617.4px;top:352.6px;width:11.6px;height:11.6px;background:#fdfdfd;border:1.900px solid #5a5a5a;border-radius:2.600px;"></div>
<span class="t" id="t100" style="left:1638.3px;top:354px;font-size:11px;color:#565656;transform:scaleX(0.9471);">Full Screen</span>
<div style="left:1617px;top:370px;width:195px;height:1.4px;background:#e6e6e6;"></div>
<span class="t" id="t101" style="left:1617.2px;top:380px;font-size:11px;color:#565656;transform:scaleX(0.9595);">On (Spacebar) Stop:</span>
<div style="left:1617.4px;top:396.6px;width:11.6px;height:11.6px;background:#fdfdfd;border:1.900px solid #5a5a5a;border-radius:2.600px;"></div>
<span class="t" id="t102" style="left:1638.3px;top:398px;font-size:11px;color:#565656;transform:scaleX(0.9651);">If caching, play cached frames</span>
<div style="left:1617.4px;top:414.8px;width:11.6px;height:11.6px;background:#5c5c5c;border-radius:2px;"></div>
<svg style="left:1617.4px;top:414.8px;" width="11.6" height="11.6" viewBox="0 0 12 12"><path d="M2.600 6l2.300 2.300 4.200-5" fill="none" stroke="#fff" stroke-width="1.700"/></svg>
<span class="t" id="t103" style="left:1638.3px;top:416px;font-size:11px;color:#565656;transform:scaleX(1.0230);">Move time to preview time</span>
<span class="t" id="t104" style="left:1623.4px;top:469px;font-size:11px;color:#2e2e2e;transform:scaleX(0.9720);">Properties: No Selection</span>
<svg style="left:1891.7px;top:470.6px;" width="8.3" height="7.2" viewBox="0 0 8.3 7.2"><path d="M0 .6h8.3 M0 3.6h8.3 M0 6.6h8.3" stroke="#6b6b6b" stroke-width="1.100"/></svg>
<div style="left:1612.3px;top:508.8px;width:298px;height:1.2px;background:#d2d2d2;"></div>
<span class="t" id="t105" style="left:1623.4px;top:518px;font-size:11px;color:#565656;transform:scaleX(0.9931);">Align</span>
<div style="left:1612.3px;top:534.2px;width:298px;height:1.8px;background:#d6d6d6;"></div>
<span class="t" id="t106" style="left:1623.4px;top:544px;font-size:11px;color:#565656;transform:scaleX(1.0057);">Audio</span>
<div style="left:1612.3px;top:560px;width:298px;height:1.8px;background:#d6d6d6;"></div>
<span class="t" id="t107" style="left:1623.4px;top:570px;font-size:11px;color:#2e2e2e;transform:scaleX(0.9374);">Effects &amp; Presets</span>
<svg style="left:1891.7px;top:571.6px;" width="8.3" height="7.2" viewBox="0 0 8.3 7.2"><path d="M0 .6h8.3 M0 3.6h8.3 M0 6.6h8.3" stroke="#6b6b6b" stroke-width="1.100"/></svg>
<div style="left:1616.7px;top:589.4px;width:289px;height:18.8px;background:#fdfdfd;border:1px solid #e2e2e2;border-radius:4.500px;"></div>
<svg style="left:1623.4px;top:594.2px;" width="17" height="11" viewBox="0 0 17 11"><circle cx="4.200" cy="4.200" r="3.500" fill="none" stroke="#5c5c5c" stroke-width="1.100"/><path d="M6.800 6.800l3 3" stroke="#5c5c5c" stroke-width="1.300"/><path d="M10.600 5.800l2 2 2-2" fill="none" stroke="#5c5c5c" stroke-width="1"/></svg>
<span class="t" id="t108" style="left:1645.7px;top:595px;font-size:11px;color:#565656;transform:scaleX(1.0196);">shatter</span>
<svg style="left:1889.4px;top:594.6px;" width="9" height="9" viewBox="0 0 9 9"><path d="M0.800 0.800l7.400 7.400M8.200 0.800L0.800 8.200" stroke="#6b6b6b" stroke-width="1.400"/></svg>
<div style="left:1612.3px;top:611.4px;width:298px;height:1px;background:#dcdcdc;"></div>
<svg style="left:1617.6px;top:617px;" width="8.6" height="6" viewBox="0 0 8.6 6"><path d="M0.600 0.800l3.700 3.800L8 0.800" fill="none" stroke="#6b6b6b" stroke-width="1.600"/></svg>
<span class="t" id="t109" style="left:1627.4px;top:615px;font-size:11px;color:#565656;transform:scaleX(1.0047);">Simulation</span>
<div style="left:1612.3px;top:628.4px;width:298px;height:17.8px;background:#d2d2d2;"></div>
<svg style="left:1645.8px;top:631px;" width="12" height="12" viewBox="0 0 12 12"><rect x="0.400" y="2.400" width="11.200" height="9.400" rx="1" fill="#555"/><path d="M3.400 2.400V0.800h5.200v1.600" fill="none" stroke="#555" stroke-width="1.400"/><text x="6" y="10.300" font-size="7.500" font-family="Liberation Sans, sans-serif" fill="#e8e8e8" text-anchor="middle">8</text></svg>
<div style="left:1662.3px;top:630px;width:41.7px;height:14.2px;background:#5c5c5c;"></div>
<span class="t" id="t110" style="left:1664.4px;top:632px;font-size:11px;color:#fff;transform:scaleX(0.9896);">Shatter</span>
<svg style="left:1880.8px;top:630.4px;" width="12.6" height="12.6" viewBox="0 0 12.6 12.6"><circle cx="6.300" cy="6.300" r="5.600" fill="none" stroke="#6b6b6b" stroke-width="1"/><rect x="5.700" y="5.300" width="1.300" height="4.200" fill="#6b6b6b"/><circle cx="6.300" cy="3.600" r="0.800" fill="#6b6b6b"/></svg>
<div style="left:1612.3px;top:646.2px;width:298px;height:1px;background:#8c8c8c;"></div>
<div style="left:1909px;top:646.2px;width:1px;height:24px;background:#8c8c8c;"></div>
<svg style="left:1890px;top:652.6px;" width="12.4" height="12.4" viewBox="0 0 12.4 12.4"><rect x="0.400" y="0.400" width="12" height="12" fill="#6b6b6b"/><path d="M0 4.600l7.800 7.800H0z" fill="#f8f8f8"/><path d="M0.400 6.400l5.600 5.600H0.400z" fill="#b4b4b4"/></svg>
<div style="left:1918.6px;top:85.5px;width:1.4px;height:946px;background:#d0d0d0;"></div>
<div style="left:0px;top:729px;width:1611px;height:4.5px;background:#d3d3d3;"></div>
<div style="left:1px;top:732.8px;width:1606.1px;height:298.2px;background:#f8f8f8;border:1.300px solid #1473e6;"></div>
<div style="left:27px;top:739.6px;width:10px;height:9.6px;background:#a89475;"></div>
<span class="t" id="t111" style="left:48px;top:740px;font-size:11px;color:#565656;">wallkeys</span>
<span class="t" id="t112" style="left:146.2px;top:740px;font-size:11px;color:#565656;transform:scaleX(0.9699);">Render Queue</span>
<div style="left:272px;top:739.6px;width:10px;height:9.6px;background:#a89475;"></div>
<span class="t" id="t113" style="left:293px;top:740px;font-size:11px;color:#565656;transform:scaleX(0.9688);">Shatter effect</span>
<div style="left:412px;top:739.6px;width:10px;height:9.6px;background:#a89475;"></div>
<span class="t" id="t114" style="left:433.3px;top:740px;font-size:11px;color:#565656;">walldesign</span>
<div style="left:540px;top:739.6px;width:10px;height:9.6px;background:#a89475;"></div>
<span class="t" id="t115" style="left:561.3px;top:740px;font-size:11px;color:#565656;transform:scaleX(1.0094);">precomp</span>
<div style="left:660px;top:739.6px;width:10px;height:9.6px;background:#a89475;"></div>
<span class="t" id="t116" style="left:681.3px;top:740px;font-size:11px;color:#565656;transform:scaleX(0.9779);">mask</span>
<svg style="left:747.5px;top:742.4px;" width="5.2" height="5.2" viewBox="0 0 5.2 5.2"><path d="M0.300 0.300l4.600 4.600M4.900 0.300L0.300 4.900" stroke="#555" stroke-width="0.900"/></svg>
<div style="left:762px;top:739.6px;width:10px;height:9.6px;background:#a89475;"></div>
<span class="t" id="t117" style="left:783px;top:740px;font-size:11px;color:#2a2a2a;transform:scaleX(0.9887);">finaldesign</span>
<svg style="left:845.8px;top:741.4px;" width="8.2" height="7.2" viewBox="0 0 8.2 7.2"><path d="M0 .6h8.2 M0 3.6h8.2 M0 6.6h8.2" stroke="#6b6b6b" stroke-width="1.100"/></svg>
<div style="left:747px;top:755px;width:107px;height:1.4px;background:#2a2a2a;"></div>
<span class="t" id="t118" style="left:13.8px;top:761px;font-size:16.5px;color:#1473e6;font-weight:700;transform:scaleX(0.8918);">0;00;00;05</span>
<span class="t" id="t119" style="left:11px;top:778px;font-size:11px;color:#0d4ea6;transform:scaleX(0.9045);">00005 (29.97 fps)</span>
<div style="left:99.5px;top:765px;width:371px;height:18.2px;background:#fdfdfd;border:1px solid #e2e2e2;border-radius:4.500px;"></div>
<svg style="left:105.5px;top:769px;" width="17" height="11" viewBox="0 0 17 11"><circle cx="4.200" cy="4.200" r="3.500" fill="none" stroke="#5c5c5c" stroke-width="1.100"/><path d="M6.800 6.800l3 3" stroke="#5c5c5c" stroke-width="1.300"/><path d="M10.600 5.800l2 2 2-2" fill="none" stroke="#5c5c5c" stroke-width="1"/></svg>
<svg style="left:483px;top:768.5px;" width="17.5" height="14" viewBox="0 0 17.5 14"><path d="M0.500 3.500h5.500M6 3.500h3v7h3" fill="none" stroke="#6b6b6b" stroke-width="1.200"/><rect x="3" y="2" width="3.200" height="3" fill="#6b6b6b"/><rect x="10" y="2.200" width="5" height="2.600" fill="#6b6b6b"/><rect x="10" y="9.200" width="5" height="2.600" fill="#6b6b6b"/><path d="M9 3.500h1.500" stroke="#6b6b6b" stroke-width="1.200"/><path d="M12.500 12.200h3l-1.500 1.800z" fill="#6b6b6b"/></svg>
<svg style="left:507px;top:769px;" width="16" height="13" viewBox="0 0 16 13"><rect x="0" y="8.600" width="15.500" height="3.600" fill="#c8c8c8"/><path d="M1.500 6.200C3 2.600 5.400 1 7.800 1s4.800 1.600 6.200 5.200l-1.800 0.600c-0.800-1.800-2-2.800-3.500-3.200v7h-1.800v-7c-1.500 0.400-2.700 1.400-3.500 3.200z" fill="#6b6b6b"/></svg>
<svg style="left:531.8px;top:768.8px;" width="14.6" height="13.6" viewBox="0 0 14.6 13.6"><rect x="3.600" y="0.500" width="10.500" height="9.400" fill="#6b6b6b"/><path d="M0.600 3.400v9.600h10.600" fill="none" stroke="#6b6b6b" stroke-width="1.200"/><rect x="4.4" y="1.6" width="1.200" height="1.400" fill="#f8f8f8"/><rect x="4.4" y="4.4" width="1.200" height="1.400" fill="#f8f8f8"/><rect x="4.4" y="7.2" width="1.200" height="1.400" fill="#f8f8f8"/><rect x="12.1" y="1.6" width="1.200" height="1.400" fill="#f8f8f8"/><rect x="12.1" y="4.4" width="1.200" height="1.400" fill="#f8f8f8"/><rect x="12.1" y="7.2" width="1.200" height="1.400" fill="#f8f8f8"/><rect x="6.200" y="1.600" width="5.300" height="3" fill="#f8f8f8"/><rect x="6.200" y="5.600" width="5.300" height="3" fill="#f8f8f8"/></svg>
<svg style="left:555.5px;top:768.5px;" width="15.5" height="14" viewBox="0 0 15.5 14"><ellipse cx="9" cy="5.600" rx="5.800" ry="4.800" fill="#c4c4c4" stroke="#555" stroke-width="1"/><ellipse cx="6.400" cy="8" rx="5.800" ry="4.800" fill="#dcdcdc" stroke="#555" stroke-width="1"/></svg>
<svg style="left:579.2px;top:767.8px;" width="17" height="15" viewBox="0 0 17 15"><rect x="0.700" y="2.600" width="15" height="11.600" fill="none" stroke="#6b6b6b" stroke-width="1.200"/><path d="M1 3.200c4 0.400 5.600 2.400 7.400 5.400s3.600 5 7 5.400" fill="none" stroke="#6b6b6b" stroke-width="1.100"/><path d="M3.600 0.400v2M8.200 0.400v2M12.800 0.400v2" stroke="#6b6b6b" stroke-width="1"/></svg>
<div style="left:3px;top:791.8px;width:606px;height:1px;background:#d8d8d8;"></div>
<svg style="left:7.6px;top:799.4px;" width="10.8" height="8" viewBox="0 0 10.8 8"><path d="M0.500 4C2 1.500 3.600 0.600 5.400 0.600s3.400 0.900 4.900 3.400C8.800 6.500 7.200 7.400 5.400 7.400S2 6.500 0.500 4z" fill="none" stroke="#6b6b6b" stroke-width="1.200"/><circle cx="5.400" cy="3.600" r="2" fill="#6b6b6b"/><circle cx="4.700" cy="3" r="0.700" fill="#f8f8f8"/></svg>
<svg style="left:22px;top:797.6px;" width="10.5" height="11" viewBox="0 0 10.5 11"><path d="M0.400 3.600h2.200L6 0.600v9.800L2.600 7.400H0.400z" fill="#6b6b6b"/><path d="M7.400 3.200a3.400 3.400 0 0 1 0 4.600M8.800 1.600a5.600 5.600 0 0 1 0 7.800" fill="none" stroke="#6b6b6b" stroke-width="0.900"/></svg>
<svg style="left:39.6px;top:800.2px;" width="6.4" height="6.4" viewBox="0 0 6.4 6.4"><circle cx="3.200" cy="3.200" r="3" fill="#6b6b6b"/></svg>
<svg style="left:52.6px;top:797px;" width="10" height="11.4" viewBox="0 0 10 11.4"><rect x="0.500" y="5" width="9" height="6.200" rx="0.800" fill="#6b6b6b"/><path d="M2.400 5V3.200a2.600 2.600 0 0 1 5.200 0V5" fill="none" stroke="#6b6b6b" stroke-width="1.300"/><rect x="4.300" y="6.800" width="1.400" height="2.600" fill="#f8f8f8"/></svg>
<div style="left:68.2px;top:797.8px;width:2.6px;height:10.2px;background:#e6e6e6;"></div>
<div style="left:99.7px;top:797.8px;width:2.6px;height:10.2px;background:#e6e6e6;"></div>
<div style="left:132.7px;top:797.8px;width:2.6px;height:10.2px;background:#e6e6e6;"></div>
<div style="left:263.2px;top:797.8px;width:2.6px;height:10.2px;background:#e6e6e6;"></div>
<div style="left:473.7px;top:797.8px;width:2.6px;height:10.2px;background:#e6e6e6;"></div>
<div style="left:590.7px;top:797.8px;width:2.6px;height:10.2px;background:#e6e6e6;"></div>
<svg style="left:82.5px;top:798.2px;" width="12" height="11.5" viewBox="0 0 12 11.5"><path d="M0.400 0.400h5.200l6.200 6.200-4.600 4.600L0.800 5z" fill="#6b6b6b"/><circle cx="2.800" cy="2.800" r="1" fill="#f8f8f8"/></svg>
<span class="t" id="t120" style="left:108.3px;top:799px;font-size:9.5px;color:#5c5c5c;transform:scaleX(0.9251);">#</span>
<span class="t" id="t121" style="left:140px;top:800px;font-size:9.3px;color:#5c5c5c;transform:scaleX(0.9605);-webkit-text-stroke:0.250px currentColor;">Source Name</span>
<span class="t" id="t122" style="left:270.6px;top:800px;font-size:9.3px;color:#5c5c5c;-webkit-text-stroke:0.250px currentColor;">Mode</span>
<span class="t" id="t123" style="left:345.2px;top:800px;font-size:9.3px;color:#5c5c5c;transform:scaleX(0.9495);-webkit-text-stroke:0.250px currentColor;">T</span>
<span class="t" id="t124" style="left:362.6px;top:800px;font-size:9.3px;color:#5c5c5c;transform:scaleX(0.9726);-webkit-text-stroke:0.250px currentColor;">Track Matte</span>
<svg style="left:446.2px;top:797.6px;" width="11.4" height="11" viewBox="0 0 11.4 11"><rect width="11.400" height="11" rx="1.200" fill="#6b6b6b"/><circle cx="5.700" cy="5.500" r="3.600" fill="#f4f4f4"/></svg>
<svg style="left:461.3px;top:797.2px;" width="11" height="11.4" viewBox="0 0 11 11.4"><path d="M0.600 1.400h7.600v8.800H0.600z" fill="none" stroke="#6b6b6b" stroke-width="1.200"/><path d="M2.200 8.600C3 4.800 5.600 2.200 10.600 0.400 9.800 4.400 7.400 7.200 2.200 8.600z" fill="#6b6b6b"/></svg>
<span class="t" id="t125" style="left:480.8px;top:800px;font-size:9.3px;color:#5c5c5c;transform:scaleX(0.9941);-webkit-text-stroke:0.250px currentColor;">Parent &amp; Link</span>
<div style="left:3px;top:811px;width:606px;height:1px;background:#d0d0d0;"></div>
<div style="left:2.3px;top:812px;width:606.7px;height:17px;background:#e5e5e5;"></div>
<div style="left:2.3px;top:829px;width:606.7px;height:17px;background:#e5e5e5;"></div>
<div style="left:2.3px;top:828.4px;width:606.7px;height:1px;background:#d4d4d4;"></div>
<div style="left:2.3px;top:845.4px;width:606.7px;height:1px;background:#d4d4d4;"></div>
<div style="left:6.8px;top:814.6px;width:11.6px;height:10.4px;background:#fbfbfb;border-radius:1.500px;"></div>
<svg style="left:7.6px;top:816px;" width="10.4" height="7.6" viewBox="0 0 10.4 7.6"><path d="M0.500 3.800C1.900 1.400 3.500 0.600 5.200 0.600s3.300 0.800 4.700 3.200C8.500 6.200 6.900 7 5.200 7S1.900 6.200 0.500 3.800z" fill="#fdfdfd" stroke="#5a5a5a" stroke-width="1.200"/><circle cx="5.200" cy="3.400" r="2" fill="#5a5a5a"/><circle cx="4.500" cy="2.800" r="0.700" fill="#fdfdfd"/></svg>
<div style="left:37px;top:814.6px;width:10.8px;height:10.4px;background:#fbfbfb;border-radius:1.500px;"></div>
<div style="left:52px;top:814.6px;width:10.8px;height:10.4px;background:#fbfbfb;border-radius:1.500px;"></div>
<svg style="left:74.6px;top:815.2px;" width="6.4" height="9.4" viewBox="0 0 6.4 9.4"><path d="M1 0.800l4 3.900-4 3.900" fill="none" stroke="#5a5a5a" stroke-width="1.900"/></svg>
<div style="left:87px;top:814.2px;width:11.7px;height:11.4px;background:#a89475;"></div>
<span class="t" id="t126" style="left:108.5px;top:815px;font-size:11px;color:#565656;transform:scaleX(0.8980);">1</span>
<svg style="left:135.8px;top:813.6px;" width="15.91" height="12.8" viewBox="0 0 16.400 13.200"><rect width="16.400" height="13.200" fill="#5b5b5b"/><rect x="3" y="1.600" width="10.400" height="10" fill="#f0f0f0"/><rect x="0.8" y="1.4" width="1.400" height="1.500" fill="#f0f0f0"/><rect x="0.8" y="4.4" width="1.400" height="1.500" fill="#f0f0f0"/><rect x="0.8" y="7.4" width="1.400" height="1.500" fill="#f0f0f0"/><rect x="0.8" y="10.4" width="1.400" height="1.500" fill="#f0f0f0"/><rect x="14.2" y="1.4" width="1.400" height="1.500" fill="#f0f0f0"/><rect x="14.2" y="4.4" width="1.400" height="1.500" fill="#f0f0f0"/><rect x="14.2" y="7.4" width="1.400" height="1.500" fill="#f0f0f0"/><rect x="14.2" y="10.4" width="1.400" height="1.500" fill="#f0f0f0"/><circle cx="6.400" cy="5" r="2.300" fill="#2a78e4"/><rect x="8" y="5.500" width="4" height="3.600" fill="#e0322c"/><path d="M4.200 10.600l2.400-3.600 2.400 3.600z" fill="#2f9e44"/></svg>
<span class="t" id="t127" style="left:156.3px;top:815px;font-size:11px;color:#565656;transform:scaleX(0.9796);">Pre-comp 1</span>
<div style="left:268.3px;top:813.6px;width:67.2px;height:12.6px;background:#fdfdfd;border-radius:3.500px;"></div>
<span class="t" id="t128" style="left:276.3px;top:815px;font-size:11px;color:#565656;transform:scaleX(1.0070);">Normal</span>
<svg style="left:318.8px;top:817px;" width="9.2" height="6.2" viewBox="0 0 9.2 6.2"><path d="M0.600 0.600L4.6 5.2L8.6 0.600" fill="none" stroke="#4c4c4c" stroke-width="1.9"/></svg>
<div style="left:342px;top:814.4px;width:11px;height:10.6px;background:#fbfbfb;border-radius:1.500px;"></div>
<svg style="left:359.5px;top:814.8px;" width="13" height="10.4" viewBox="0 0 13 10.4"><path d="M8.400 7.800A4.200 4.200 0 1 1 8.600 3" fill="none" stroke="#555" stroke-width="1"/><circle cx="4.800" cy="5.200" r="1.700" fill="none" stroke="#555" stroke-width="0.900"/><path d="M10.800 0.800v4M10.800 7v1.200" stroke="#555" stroke-width="1.200"/></svg>
<div style="left:375px;top:813.6px;width:67.5px;height:12.6px;background:#fdfdfd;border-radius:3.500px;"></div>
<span class="t" id="t129" style="left:383.8px;top:815px;font-size:11px;color:#565656;transform:scaleX(0.9924);">No Mat</span>
<svg style="left:425.4px;top:817px;" width="9.2" height="6.2" viewBox="0 0 9.2 6.2"><path d="M0.600 0.600L4.6 5.2L8.6 0.600" fill="none" stroke="#4c4c4c" stroke-width="1.9"/></svg>
<svg style="left:481.3px;top:814.6px;" width="12" height="10.8" viewBox="0 0 12 10.8"><path d="M6 5.400a1.400 1.400 0 1 1 1.400 1.400A3 3 0 1 1 9.200 3.200 4.800 4.800 0 1 0 10.600 7" fill="none" stroke="#555" stroke-width="0.900"/></svg>
<div style="left:499px;top:813.6px;width:89px;height:12.6px;background:#fdfdfd;border-radius:3.500px;"></div>
<span class="t" id="t130" style="left:507.5px;top:815px;font-size:11px;color:#565656;">None</span>
<svg style="left:570px;top:817px;" width="9.6" height="6.4" viewBox="0 0 9.6 6.4"><path d="M0.600 0.600L4.8 5.4L9 0.600" fill="none" stroke="#4c4c4c" stroke-width="1.9"/></svg>
<div style="left:6.8px;top:831.6px;width:11.6px;height:10.4px;background:#fbfbfb;border-radius:1.500px;"></div>
<svg style="left:7.6px;top:833px;" width="10.4" height="7.6" viewBox="0 0 10.4 7.6"><path d="M0.500 3.800C1.900 1.400 3.500 0.600 5.200 0.600s3.300 0.800 4.700 3.200C8.500 6.200 6.900 7 5.200 7S1.900 6.200 0.500 3.800z" fill="#fdfdfd" stroke="#5a5a5a" stroke-width="1.200"/><circle cx="5.200" cy="3.400" r="2" fill="#5a5a5a"/><circle cx="4.500" cy="2.800" r="0.700" fill="#fdfdfd"/></svg>
<div style="left:37px;top:831.6px;width:10.8px;height:10.4px;background:#fbfbfb;border-radius:1.500px;"></div>
<div style="left:52px;top:831.6px;width:10.8px;height:10.4px;background:#fbfbfb;border-radius:1.500px;"></div>
<svg style="left:74.6px;top:832.2px;" width="6.4" height="9.4" viewBox="0 0 6.4 9.4"><path d="M1 0.800l4 3.900-4 3.900" fill="none" stroke="#5a5a5a" stroke-width="1.900"/></svg>
<div style="left:87px;top:831.2px;width:11.7px;height:11.4px;background:#a9a8cf;"></div>
<span class="t" id="t131" style="left:108.5px;top:832px;font-size:11px;color:#565656;transform:scaleX(0.8980);">2</span>
<svg style="left:139.4px;top:830.4px;" width="10.49" height="13.24" viewBox="0 0 12.200 15.400"><path d="M0.600 0.600h7.400l3.600 3.600v10.600h-11z" fill="#fff" stroke="#8c8c8c" stroke-width="0.900"/><path d="M8 0.600v3.600h3.600" fill="none" stroke="#8c8c8c" stroke-width="0.900"/><rect x="2.600" y="5.400" width="6.800" height="6.800" fill="#1f7de0"/><path d="M3.200 11.400l2.200-3 1.400 1.600 1-1 1.200 2.400z" fill="#bfe0ff"/><circle cx="7.600" cy="6.900" r="0.800" fill="#bfe0ff"/></svg>
<span class="t" id="t132" style="left:156.3px;top:832px;font-size:11px;color:#565656;transform:scaleX(0.9286);">SSU_Tex...06x994.png</span>
<div style="left:268.3px;top:830.6px;width:67.2px;height:12.6px;background:#fdfdfd;border-radius:3.500px;"></div>
<span class="t" id="t133" style="left:276.3px;top:832px;font-size:11px;color:#565656;transform:scaleX(1.0070);">Normal</span>
<svg style="left:318.8px;top:834px;" width="9.2" height="6.2" viewBox="0 0 9.2 6.2"><path d="M0.600 0.600L4.6 5.2L8.6 0.600" fill="none" stroke="#4c4c4c" stroke-width="1.9"/></svg>
<div style="left:342px;top:831.4px;width:11px;height:10.6px;background:#fbfbfb;border-radius:1.500px;"></div>
<svg style="left:359.5px;top:831.8px;" width="13" height="10.4" viewBox="0 0 13 10.4"><path d="M8.400 7.800A4.200 4.200 0 1 1 8.600 3" fill="none" stroke="#555" stroke-width="1"/><circle cx="4.800" cy="5.200" r="1.700" fill="none" stroke="#555" stroke-width="0.900"/><path d="M10.800 0.800v4M10.800 7v1.200" stroke="#555" stroke-width="1.200"/></svg>
<div style="left:375px;top:830.6px;width:67.5px;height:12.6px;background:#fdfdfd;border-radius:3.500px;"></div>
<span class="t" id="t134" style="left:383.8px;top:832px;font-size:11px;color:#565656;transform:scaleX(0.9924);">No Mat</span>
<svg style="left:425.4px;top:834px;" width="9.2" height="6.2" viewBox="0 0 9.2 6.2"><path d="M0.600 0.600L4.6 5.2L8.6 0.600" fill="none" stroke="#4c4c4c" stroke-width="1.9"/></svg>
<svg style="left:481.3px;top:831.6px;" width="12" height="10.8" viewBox="0 0 12 10.8"><path d="M6 5.400a1.400 1.400 0 1 1 1.400 1.400A3 3 0 1 1 9.200 3.200 4.800 4.800 0 1 0 10.600 7" fill="none" stroke="#555" stroke-width="0.900"/></svg>
<div style="left:499px;top:830.6px;width:89px;height:12.6px;background:#fdfdfd;border-radius:3.500px;"></div>
<span class="t" id="t135" style="left:507.5px;top:832px;font-size:11px;color:#565656;">None</span>
<svg style="left:570px;top:834px;" width="9.6" height="6.4" viewBox="0 0 9.6 6.4"><path d="M0.600 0.600L4.8 5.4L9 0.600" fill="none" stroke="#4c4c4c" stroke-width="1.9"/></svg>
<div style="left:3.2px;top:1013.6px;width:606px;height:1px;background:#9c9c9c;"></div>
<svg style="left:8px;top:1016.5px;" width="11.6" height="11.6" viewBox="0 0 11.6 11.6"><rect x="0.500" y="0.500" width="7.400" height="7.400" fill="#f8f8f8" stroke="#6b6b6b" stroke-width="1"/><rect x="3.300" y="3.300" width="7.600" height="7.600" fill="#f8f8f8" stroke="#6b6b6b" stroke-width="1"/><path d="M7.100 5.200v3.800M5.200 7.100h3.800" stroke="#6b6b6b" stroke-width="0.900"/></svg>
<div style="left:25px;top:1015px;width:14.6px;height:14.4px;background:#d4d4d4;border-radius:2px;"></div>
<svg style="left:26.8px;top:1016.4px;" width="11.6" height="11.6" viewBox="0 0 11.6 11.6"><circle cx="4.400" cy="4.400" r="3.800" fill="none" stroke="#333" stroke-width="1.100"/><rect x="4.600" y="4.600" width="6.200" height="6.200" fill="none" stroke="#333" stroke-width="1.100"/></svg>
<span class="t" id="t136" style="left:46px;top:1017px;font-size:12.5px;color:#444;transform:scaleX(1.3159);">{}</span>
<svg style="left:64.5px;top:1017px;" width="13" height="10.5" viewBox="0 0 13 10.5"><circle cx="4.200" cy="3.400" r="3" fill="#555"/><path d="M0 10.400c0-3.200 1.800-4.600 4.200-4.600s4.200 1.400 4.200 4.600z" fill="#555"/><circle cx="9.600" cy="3.200" r="1.500" fill="none" stroke="#555" stroke-width="0.800"/><path d="M11.500 2v3" stroke="#555" stroke-width="0.900"/></svg>
<span class="t" id="t137" style="left:105.5px;top:1018px;font-size:11px;color:#565656;transform:scaleX(0.9745);">Frame Render Time:</span>
<span class="t" id="t138" style="left:208.8px;top:1018px;font-size:11px;color:#3dcf8e;font-weight:700;transform:scaleX(0.9488);">15ms</span>
<span class="t" id="t139" style="left:310px;top:1017px;font-size:11px;color:#565656;transform:scaleX(0.9945);">Toggle Switches / Modes</span>
<div style="left:609px;top:761px;width:1px;height:252px;background:#8c8c8c;"></div>
<div style="left:610px;top:811.5px;width:6.5px;height:202px;background:#e4e4e4;"></div>
<div style="left:616.5px;top:811.5px;width:965.5px;height:201px;background:#e9e9e9;"></div>
<div style="left:1582px;top:811.5px;width:7px;height:35px;background:#e4e4e4;"></div>
<div style="left:608.8px;top:761.4px;width:980.2px;height:10.4px;background:#cdcdcd;border-top:1.400px solid #6a6a6a;border-bottom:1.400px solid #6a6a6a;border-radius:5px 5px 0 0;"></div>
<div style="left:608.8px;top:762.6px;width:7.2px;height:8px;background:#1473e6;border-radius:6px 0 0 0;"></div>
<div style="left:1582px;top:762.6px;width:7px;height:8px;background:#1473e6;border-radius:0 5px 0 0;"></div>
<div style="left:655.4px;top:763.4px;width:1.9px;height:7.4px;background:#5e93dd;"></div>
<div style="left:616.5px;top:772.6px;width:965.5px;height:18px;background:#f9f9f9;"></div>
<div style="left:616.5px;top:790.6px;width:972px;height:1.2px;background:#6a6a6a;"></div>
<div style="left:1582px;top:772.6px;width:7px;height:18px;background:#dcdcdc;"></div>
<div style="left:1588.6px;top:766px;width:1px;height:46px;background:#8c8c8c;"></div>
<div style="left:608.700px;top:772px;width:973.300px;height:19px;overflow:hidden;">
<div style="left:7px;top:11.5px;width:1.2px;height:7.5px;background:#5c5c5c;"></div>
<span class="t" id="t140" style="left:-4.1px;top:3px;font-size:10px;color:#5c5c5c;transform:scaleX(1.0247);">0:00f</span>
<div style="left:87.4px;top:14.2px;width:1.2px;height:4.8px;background:#5c5c5c;"></div>
<span class="t" id="t141" style="left:81.4px;top:3px;font-size:10px;color:#5c5c5c;transform:scaleX(0.9924);">10f</span>
<div style="left:167.8px;top:14.2px;width:1.2px;height:4.8px;background:#5c5c5c;"></div>
<span class="t" id="t142" style="left:161.5px;top:3px;font-size:10px;color:#5c5c5c;transform:scaleX(1.0355);">20f</span>
<div style="left:248.2px;top:11.5px;width:1.2px;height:7.5px;background:#5c5c5c;"></div>
<span class="t" id="t143" style="left:234.5px;top:3px;font-size:10px;color:#5c5c5c;transform:scaleX(1.0067);">01:00f</span>
<div style="left:328.6px;top:14.2px;width:1.2px;height:4.8px;background:#5c5c5c;"></div>
<span class="t" id="t144" style="left:322.6px;top:3px;font-size:10px;color:#5c5c5c;transform:scaleX(0.9924);">10f</span>
<div style="left:409px;top:14.2px;width:1.2px;height:4.8px;background:#5c5c5c;"></div>
<span class="t" id="t145" style="left:402.7px;top:3px;font-size:10px;color:#5c5c5c;transform:scaleX(1.0355);">20f</span>
<div style="left:489.4px;top:11.5px;width:1.2px;height:7.5px;background:#5c5c5c;"></div>
<span class="t" id="t146" style="left:475.7px;top:3px;font-size:10px;color:#5c5c5c;transform:scaleX(1.0067);">02:00f</span>
<div style="left:569.8px;top:14.2px;width:1.2px;height:4.8px;background:#5c5c5c;"></div>
<span class="t" id="t147" style="left:563.8px;top:3px;font-size:10px;color:#5c5c5c;transform:scaleX(0.9924);">10f</span>
<div style="left:650.2px;top:14.2px;width:1.2px;height:4.8px;background:#5c5c5c;"></div>
<span class="t" id="t148" style="left:643.9px;top:3px;font-size:10px;color:#5c5c5c;transform:scaleX(1.0355);">20f</span>
<div style="left:730.6px;top:11.5px;width:1.2px;height:7.5px;background:#5c5c5c;"></div>
<span class="t" id="t149" style="left:716.9px;top:3px;font-size:10px;color:#5c5c5c;transform:scaleX(1.0067);">03:00f</span>
<div style="left:811px;top:14.2px;width:1.2px;height:4.8px;background:#5c5c5c;"></div>
<span class="t" id="t150" style="left:805px;top:3px;font-size:10px;color:#5c5c5c;transform:scaleX(0.9924);">10f</span>
<div style="left:891.4px;top:14.2px;width:1.2px;height:4.8px;background:#5c5c5c;"></div>
<span class="t" id="t151" style="left:885.1px;top:3px;font-size:10px;color:#5c5c5c;transform:scaleX(1.0355);">20f</span>
<div style="left:971.8px;top:11.5px;width:1.2px;height:7.5px;background:#5c5c5c;"></div>
<span class="t" id="t152" style="left:958.1px;top:3px;font-size:10px;color:#5c5c5c;transform:scaleX(1.0067);">04:00f</span>
</div>
<div style="left:608.8px;top:792.4px;width:980.2px;height:14.4px;background:#cacaca;border-bottom:1px solid #7c7c7c;"></div>
<div style="left:608.8px;top:792.4px;width:7px;height:14.4px;background:#1473e6;border-radius:5px 0 0 5px;"></div>
<div style="left:1582px;top:792.4px;width:6.4px;height:14.4px;background:#1473e6;border-radius:0 5px 5px 0;"></div>
<div style="left:616.3px;top:807.6px;width:965.7px;height:3.6px;background:#1fbf2c;"></div>
<div style="left:1589px;top:811.2px;width:17px;height:1px;background:#d0d0d0;"></div>
<div style="left:617px;top:813px;width:972px;height:14.6px;background:#b8ab96;"></div>
<svg style="left:617px;top:813px;" width="4" height="4" viewBox="0 0 4 4"><path d="M0 0h4L0 4z" fill="#6b6b6b"/></svg>
<div style="left:617px;top:829.6px;width:964.8px;height:14.8px;background:#b9b9d3;"></div>
<div style="left:610px;top:828.4px;width:979px;height:1px;background:#d8d8d8;"></div>
<div style="left:610px;top:845.4px;width:979px;height:1px;background:#dcdcdc;"></div>
<div style="left:655.7px;top:790px;width:1.3px;height:222.5px;background:#1473e6;"></div>
<svg style="left:650.6px;top:777px;" width="11.6" height="13.4" viewBox="0 0 11.6 13.4"><path d="M0.400 0.400h10.800v6.200L5.800 13 0.400 6.600z" fill="#1473e6"/><path d="M4 7.600h3.600M5.800 7.600v4.400" stroke="#cfe2fb" stroke-width="0.900"/></svg>
<svg style="left:1593px;top:794.8px;" width="11.2" height="14" viewBox="0 0 11.2 14"><path d="M0 0h11.200v8.600L5.600 14 0 8.600z" fill="#666"/></svg>
<svg style="left:1590px;top:814px;" width="15" height="13.4" viewBox="0 0 15 13.4"><rect x="8" y="3.200" width="6.800" height="6.200" fill="#666"/><path d="M7.600 0.400L0.600 8.200h5.200" fill="#f8f8f8" stroke="#666" stroke-width="1"/><circle cx="6.600" cy="9.800" r="2.600" fill="#f8f8f8" stroke="#666" stroke-width="1"/></svg>
<div style="left:610px;top:1012.4px;width:105.6px;height:1px;background:#9c9c9c;"></div>
<svg style="left:615px;top:1019.5px;" width="9.6" height="5" viewBox="0 0 9.6 5"><path d="M0 5L3.200 1.200 5 3 6.400 1.800 9.600 5z" fill="#555"/></svg>
<svg style="left:631.5px;top:1017.2px;" width="10.6" height="10.6" viewBox="0 0 10.6 10.6"><circle cx="5.300" cy="5.300" r="4.200" fill="#fdfdfd" stroke="#6b6b6b" stroke-width="1.500"/></svg>
<div style="left:646px;top:1021.8px;width:44.5px;height:1px;background:#cfcfcf;"></div>
<svg style="left:695.5px;top:1017.8px;" width="16.4" height="7.6" viewBox="0 0 16.4 7.6"><path d="M0 7.600L3.400 2.600l1.200 1.400L8.600 0l7.800 7.600z" fill="#555"/><path d="M3.800 7.600L6 4.400" stroke="#f8f8f8" stroke-width="0.900"/></svg>
<div style="left:0px;top:1031.2px;width:1920px;height:1px;background:#f4f4f4;"></div>
<div style="left:0px;top:1032px;width:1920px;height:48px;background:#86002a;"></div>
<svg style="left:18px;top:1036px;" width="30" height="32" viewBox="0 0 30 32"><defs><linearGradient id="mn" x1="0" y1="0" x2="0.300" y2="1"><stop offset="0" stop-color="#ffc93c"/><stop offset="1" stop-color="#f08a24"/></linearGradient></defs><path d="M24.600 12.600c1.200 6.400-2.200 12.800-8.600 15.400-5 2-10.400 1-14-2.400 4.800 0.400 9.600-1.800 12.400-5.800 2-2.800 2.800-6.200 2.200-9.600z" fill="url(#mn)"/><circle cx="20" cy="10.200" r="8" fill="#ff8e9e"/></svg>
<span class="t" id="t153" style="left:34.8px;top:1041px;font-size:11.5px;color:#1a1a1a;">4</span>
<span class="t" id="t154" style="left:50.8px;top:1043px;font-size:12px;color:#ffffff;transform:scaleX(0.8937);">9°C</span>
<span class="t" id="t155" style="left:50.8px;top:1059px;font-size:12px;color:#f0dfe4;transform:scaleX(0.9481);">Clear</span>
<svg style="left:661.300px;top:1045px" width="22.800" height="22.800" viewBox="0 0 22.800 22.800"><defs><linearGradient id="wl" x1="0" y1="0" x2="1" y2="1"><stop offset="0" stop-color="#6fd6ff"/><stop offset="1" stop-color="#0f8fe8"/></linearGradient></defs><rect x="0" y="0" width="10.800" height="10.800" fill="url(#wl)"/><rect x="12" y="0" width="10.800" height="10.800" fill="url(#wl)"/><rect x="0" y="12" width="10.800" height="10.800" fill="url(#wl)"/><rect x="12" y="12" width="10.800" height="10.800" fill="url(#wl)"/></svg>
<div style="left:697px;top:1040px;width:220px;height:32px;background:#9b2547;border-radius:16px;border-top:1px solid #a83a5a;"></div>
<svg style="left:708px;top:1048px;" width="15" height="16" viewBox="0 0 15 16"><circle cx="6.400" cy="6.400" r="5.300" fill="none" stroke="#fff" stroke-width="1.500"/><path d="M10.200 10.400l4 4.400" stroke="#fff" stroke-width="1.700" stroke-linecap="round"/></svg>
<span class="t" id="t156" style="left:734.3px;top:1049px;font-size:14px;color:#f4e6ea;transform:scaleX(0.9175);">Search</span>
<svg style="left:928.8px;top:1045px;" width="24.5" height="22.5" viewBox="0 0 24.5 22.5"><rect x="0.500" y="8" width="17" height="14" rx="1.500" fill="#4a4a4a" opacity="0.950"/><rect x="7" y="0.500" width="17" height="15" rx="1.500" fill="#f2f2f2"/><rect x="7" y="8" width="10.500" height="7.500" fill="#c8c8c8"/></svg>
<svg style="left:972.5px;top:1044.5px;" width="25" height="23" viewBox="0 0 25 23"><path d="M0.500 3a1.500 1.500 0 0 1 1.500-1.500h6.500l2.500 3h12.500a1.500 1.500 0 0 1 1.500 1.500v3h-24.500z" fill="#e8a722"/><rect x="0.500" y="6" width="24.500" height="16.500" rx="1.500" fill="#ffd75e"/><rect x="0.500" y="14" width="24.500" height="8.500" rx="1.500" fill="#f7c23c"/><rect x="6" y="15.500" width="13.500" height="7" rx="1.400" fill="#1a73c8"/><rect x="8.500" y="17.200" width="8.500" height="1.800" rx="0.900" fill="#4aa0ee"/></svg>
<svg style="left:1016.6px;top:1043.5px;" width="24.4" height="24.4" viewBox="0 0 24.4 24.4"><circle cx="12.200" cy="12.200" r="12.200" fill="#5865f2"/><path d="M6.200 8.600c1.200-0.800 2.400-1.200 3.600-1.400l0.500 0.900c1.300-0.200 2.500-0.200 3.800 0l0.500-0.900c1.200 0.200 2.400 0.600 3.600 1.400 1.600 2.600 2.300 5.200 2 8.200-1.300 1-2.600 1.600-3.900 1.900l-0.800-1.300 1.200-0.600c-2.800 1.200-6.200 1.200-9 0l1.200 0.600-0.800 1.300c-1.300-0.300-2.600-0.900-3.900-1.900-0.300-3 0.400-5.600 2-8.200z" fill="#fff"/><ellipse cx="9.800" cy="13.200" rx="1.500" ry="1.700" fill="#5865f2"/><ellipse cx="14.600" cy="13.200" rx="1.500" ry="1.700" fill="#5865f2"/></svg>
<svg style="left:1061px;top:1044px" width="24" height="24" viewBox="0 0 24 24"><defs><radialGradient id="ig" cx="0.250" cy="1.050" r="1.250"><stop offset="0" stop-color="#ffd776"/><stop offset="0.250" stop-color="#f3a554"/><stop offset="0.450" stop-color="#ec3a6e"/><stop offset="0.700" stop-color="#c837ab"/><stop offset="1" stop-color="#6a45d6"/></radialGradient></defs><rect width="24" height="24" rx="6" fill="url(#ig)"/><rect x="4.600" y="4.600" width="14.800" height="14.800" rx="4.200" fill="none" stroke="#fff" stroke-width="1.800"/><circle cx="12" cy="12" r="3.600" fill="none" stroke="#fff" stroke-width="1.800"/><circle cx="16.700" cy="7.300" r="1.100" fill="#fff"/></svg>
<svg style="left:1105px;top:1044.500px" width="23" height="23" viewBox="0 0 23 23"><defs><linearGradient id="st" x1="0" y1="0" x2="0" y2="1"><stop offset="0" stop-color="#141c3a"/><stop offset="0.550" stop-color="#163a66"/><stop offset="1" stop-color="#2288c8"/></linearGradient></defs><circle cx="11.500" cy="11.500" r="11.400" fill="url(#st)"/><circle cx="15.200" cy="8.600" r="3.400" fill="none" stroke="#fff" stroke-width="1.500"/><circle cx="15.200" cy="8.600" r="1.500" fill="#fff"/><path d="M0.400 12.600l6.200 2.600a2.800 2.800 0 0 1 2.200-0.400l3.400-4.600 3.200 2.600-4.400 3.200a2.900 2.900 0 0 1-5.700 0.800L0.800 15z" fill="#fff"/></svg>
<svg style="left:1149.5px;top:1044.3px;" width="23" height="23" viewBox="0 0 23 23"><circle cx="11.500" cy="11.500" r="11.400" fill="#1ed760"/><path d="M5 8.400c4.200-1.300 9-0.900 12.800 1.300" fill="none" stroke="#121212" stroke-width="2.100" stroke-linecap="round"/><path d="M5.800 12.100c3.400-1 7.400-0.600 10.400 1.200" fill="none" stroke="#121212" stroke-width="1.800" stroke-linecap="round"/><path d="M6.600 15.500c2.800-0.800 5.800-0.500 8.200 0.900" fill="none" stroke="#121212" stroke-width="1.500" stroke-linecap="round"/></svg>
<div style="left:1158px;top:1072.2px;width:6.2px;height:2.6px;background:#c08a9c;border-radius:1.300px;"></div>
<svg style="left:1193px;top:1043.5px;" width="24" height="24" viewBox="0 0 24 24"><circle cx="12" cy="12" r="12" fill="#fff"/><path d="M12 12L1.600 6A12 12 0 0 1 22.400 6z" fill="#ea4335"/><path d="M12 12L22.400 6A12 12 0 0 1 12 24z" fill="#fbbc05"/><path d="M12 12L12 24A12 12 0 0 1 1.600 6z" fill="#34a853"/><circle cx="12" cy="12" r="5.600" fill="#fff"/><circle cx="12" cy="12" r="4.400" fill="#4285f4"/></svg>
<div style="left:1202px;top:1072.2px;width:6.2px;height:2.6px;background:#c08a9c;border-radius:1.300px;"></div>
<div style="left:1229px;top:1036px;width:40px;height:40px;background:#92153b;border-radius:4px;border:1px solid #9b2547;"></div>
<div style="left:1238px;top:1045.3px;width:21.5px;height:20.8px;background:#00005b;border-radius:4px;"></div>
<span class="t" id="t157" style="left:1240.6px;top:1050px;font-size:12.5px;color:#9999ff;font-weight:700;">Ae</span>
<div style="left:1241px;top:1072.2px;width:16px;height:2.8px;background:#ff4fa0;border-radius:1.400px;"></div>
<svg style="left:1652.5px;top:1052.4px;" width="11.4" height="7.2" viewBox="0 0 11.4 7.2"><path d="M0.800 6.400l4.900-5 4.900 5" fill="none" stroke="#fff" stroke-width="1.500"/></svg>
<svg style="left:1681.5px;top:1049px;" width="17" height="14.5" viewBox="0 0 17 14.5"><path d="M4.200 11.800a3.300 3.300 0 0 1-0.400-6.600 4.600 4.600 0 0 1 8.600-0.800 3.800 3.800 0 0 1 0.600 7.400z" fill="#c2869a"/><path d="M1.600 0.600l13 13.400" stroke="#e4c2cc" stroke-width="1.100"/></svg>
<span class="t" id="t158" style="left:1716.6px;top:1044px;font-size:12px;color:#fff;transform:scaleX(0.8802);">ENG</span>
<span class="t" id="t159" style="left:1720.8px;top:1060px;font-size:12px;color:#fff;transform:scaleX(0.8697);">US</span>
<svg style="left:1758px;top:1049.8px;" width="16.4" height="11.8" viewBox="0 0 16.4 11.8"><path d="M0.800 4.200a10.600 10.600 0 0 1 14.800 0M3.200 6.800a7.200 7.200 0 0 1 10 0M5.600 9.200a3.800 3.800 0 0 1 5.200 0" fill="none" stroke="#fff" stroke-width="1.300" stroke-linecap="round"/><circle cx="8.200" cy="10.800" r="1" fill="#fff"/></svg>
<svg style="left:1781.5px;top:1049.2px;" width="17" height="13" viewBox="0 0 17 13"><path d="M0.800 4.400h2.800L7.200 1v11L3.600 8.600H0.800z" fill="none" stroke="#fff" stroke-width="1.100" stroke-linejoin="round"/><path d="M9.200 4.200a3.600 3.600 0 0 1 0 4.600M11.400 2.600a6 6 0 0 1 0 7.800" fill="none" stroke="#fff" stroke-width="1.100" stroke-linecap="round"/><path d="M13.800 1a8.600 8.600 0 0 1 0 11" fill="none" stroke="#c2869a" stroke-width="1" stroke-linecap="round"/></svg>
<svg style="left:1805.5px;top:1047.6px;" width="17" height="13.6" viewBox="0 0 17 13.6"><rect x="1.200" y="3.600" width="13" height="8.400" rx="1.800" fill="none" stroke="#fff" stroke-width="1.200"/><rect x="14.600" y="6" width="1.600" height="3.600" rx="0.700" fill="#fff"/><rect x="3" y="5.400" width="9.400" height="4.800" rx="0.800" fill="#fff"/><path d="M3.600 0.200L0.600 5h2.600L2.400 9" fill="none" stroke="#fff" stroke-width="1.100"/></svg>
<span class="t" id="t160" style="left:1858px;top:1043px;font-size:12px;color:#fff;transform:scaleX(0.9530);">7:28 PM</span>
<span class="t" id="t161" style="left:1839.5px;top:1059px;font-size:12px;color:#fff;transform:scaleX(1.0173);">10/28/2025</span>
</div></body></html>
